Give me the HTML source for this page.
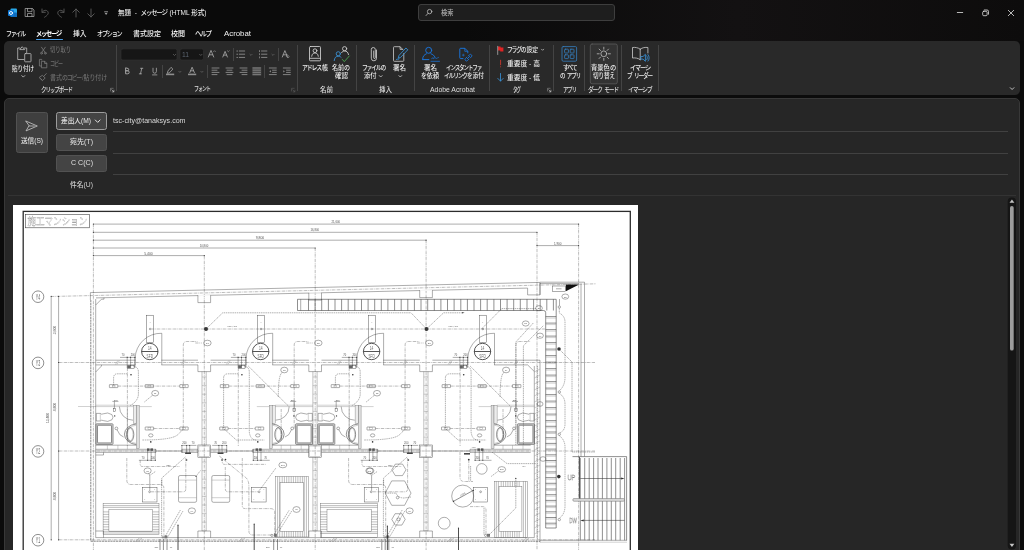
<!DOCTYPE html>
<html lang="ja">
<head>
<meta charset="utf-8">
<title>無題 - メッセージ (HTML 形式)</title>
<style>
html,body{margin:0;padding:0;}
body{width:1024px;height:550px;overflow:hidden;background:#0b0b0b;position:relative;
 font-family:"Liberation Sans","Noto Sans CJK JP",sans-serif;color:#e6e6e6;font-size:7px;line-height:1;}
#root{position:absolute;left:0;top:0;width:1024px;height:550px;will-change:transform;}
.abs{position:absolute;}
svg{position:absolute;overflow:visible;}
.t{position:absolute;white-space:nowrap;line-height:10px;height:10px;font-weight:500;}
.k{letter-spacing:-0.2em;margin-right:0.17em}
#titlebar{left:0;top:0;width:1024px;height:41px;background:linear-gradient(90deg,#0a0a0a 0%,#0a0a0a 45%,#131112 72%,#0d0c0c 100%);}
#search{left:418px;top:4px;width:197px;height:17.4px;border:1px solid #3e3e3e;border-radius:3px;background:#1e1e1e;box-sizing:border-box;}
.tab{font-size:7.2px;color:#f2f2f2;top:29px;}
#ribbon{left:4px;top:41.4px;width:1015.6px;height:53.8px;background:#292929;border-radius:5px;}
.sep{position:absolute;width:1px;background:#444;}
.gl{font-size:6.4px;color:#dedede;top:84.5px;}
.rl{font-size:6.6px;color:#ececec;}
.dim{color:#6b6b6b;}
#compose{left:4px;top:98px;width:1016px;height:460px;background:#262626;border-radius:5px 5px 0 0;border:1px solid #383838;box-sizing:border-box;}
.btn{position:absolute;box-sizing:border-box;background:#444;border:1px solid #525252;border-radius:2.5px;}
.line{position:absolute;height:1px;background:#414141;}
#doc{left:12.7px;top:204.5px;width:625.8px;height:345.5px;background:#fff;overflow:hidden;}
</style>
</head>
<body>
<div id="root">
<div id="titlebar" class="abs"></div>
<div id="search" class="abs"></div>

<!-- title bar icons -->
<svg style="left:0;top:0" width="1024" height="41" viewBox="0 0 1024 41" fill="none" stroke-linecap="round" stroke-linejoin="round">
 <!-- outlook icon -->
 <rect x="10.5" y="8.5" width="6.5" height="8.5" rx="1" fill="#28a8ea" stroke="none"/>
 <rect x="10.5" y="12.5" width="6.5" height="4.5" rx="0.8" fill="#0f6cbd" stroke="none"/>
 <rect x="8" y="10" width="6" height="6" rx="1" fill="#0f78d4" stroke="none"/>
 <circle cx="11" cy="13" r="1.5" stroke="#fff" stroke-width="0.9"/>
 <!-- save -->
 <g stroke="#b4b4b4" stroke-width="0.7">
  <path d="M25.5 8.5h7l1.500 1.500v6.500h-8.500z"/>
  <path d="M27.5 8.7v3h4.5v-3"/>
  <path d="M27.5 16.3v-2.8h4.5v2.8"/>
 </g>
 <!-- undo / redo (dim) -->
 <g stroke="#5c5c5c" stroke-width="0.9">
  <path d="M42 9v3.3h3.3"/><path d="M42.2 12.2c1.3-2.2 4.3-2.6 5.6-0.6c1.2 1.9-0.2 3.7-3.2 5.6"/>
  <path d="M64 9v3.3h-3.3"/><path d="M63.8 12.2c-1.3-2.2-4.3-2.6-5.6-0.6c-1.2 1.9 0.2 3.7 3.2 5.6"/>
  <path d="M76 17v-8M72.8 12.2l3.2-3.2l3.2 3.2"/>
  <path d="M91 9v8M87.8 13.8l3.2 3.2l3.2-3.2"/>
 </g>
 <g stroke="#d0d0d0" stroke-width="0.7"><path d="M104.6 11.8h3"/></g>
 <path d="M104.7 13.2h2.8l-1.4 1.5z" fill="#d0d0d0"/>
 <!-- search magnifier -->
 <g stroke="#bdbdbd" stroke-width="0.8"><circle cx="429.6" cy="11.6" r="2.2"/><path d="M428 13.4l-2 2.2"/></g>
 <!-- window buttons -->
 <g stroke="#e4e4e4" stroke-width="0.8">
  <path d="M957.3 12.5h5.4"/>
  <rect x="982.700" y="11.300" width="4.400" height="4.400" rx="1"/><path d="M984.300 10h2.800a1.400 1.400 0 0 1 1.400 1.400v2.800"/>
  <path d="M1008.3 10.3l5.4 5.4M1013.700 10.300l-5.400 5.400"/>
 </g>
</svg>

<!-- tabs -->
<div class="abs" style="left:36px;top:38.5px;width:27px;height:1.2px;background:#4a9ee8;border-radius:1px"></div>

<div id="ribbon" class="abs"></div>
<div class="sep" style="left:115.5px;top:44.5px;height:46.5px"></div>
<div class="sep" style="left:296.5px;top:44.5px;height:46.5px"></div>
<div class="sep" style="left:356px;top:44.5px;height:46.5px"></div>
<div class="sep" style="left:414px;top:44.5px;height:46.5px"></div>
<div class="sep" style="left:489px;top:44.5px;height:46.5px"></div>
<div class="sep" style="left:553px;top:44.5px;height:46.5px"></div>
<div class="sep" style="left:584px;top:44.5px;height:46.5px"></div>
<div class="sep" style="left:621px;top:44.5px;height:46.5px"></div>
<div class="sep" style="left:658px;top:44.5px;height:46.5px"></div>
<div class="sep" style="left:233px;top:48px;height:12.5px"></div>
<div class="sep" style="left:278px;top:48px;height:12.5px"></div>
<div class="sep" style="left:162px;top:65px;height:12.5px"></div>
<div class="sep" style="left:207px;top:65px;height:12.5px"></div>
<div class="sep" style="left:264px;top:65px;height:12.5px"></div>
<svg style="left:0;top:0" width="1024" height="100" viewBox="0 0 1024 100" fill="none" stroke-linecap="round" stroke-linejoin="round" stroke-width="0.9">
 <!-- paste -->
 <g stroke="#bdbdbd" stroke-width="0.8">
  <path d="M24 59.5h-6.3v-11.5h2.2M24.3 48h2.4v5"/>
  <path d="M20 49.3l2.2-2.6l2.2 2.6z"/>
  <rect x="24.7" y="53.6" width="6.3" height="8.2" rx="0.6" fill="#292929"/>
 </g>
 <path d="M21.8 75.6l1.5 1.5l1.5-1.5" stroke="#cfcfcf" stroke-width="0.8"/>
 <!-- cut copy painter (dim) -->
 <g stroke="#7a7a7a" stroke-width="0.8">
  <path d="M41.5 47.2l3.4 5M45.3 47.2l-3.4 5"/><circle cx="41.5" cy="53.2" r="0.9"/><circle cx="45.3" cy="53.2" r="0.9"/>
  <path d="M41.7 60v-0.6h-2.3v6.6h2"/><path d="M41.8 61.3h3l2 2v4.5h-5z"/><path d="M44.6 61.5v2h2"/>
  <path d="M46.3 73.6l-2.6 2.8"/><path d="M42.6 75.6l2.6 2.4l-2.8 2.6l-3-2.8z"/><path d="M40.6 78.6l1.6 1.5"/>
 </g>
 <!-- dialog launchers -->
 <g stroke="#8d8d8d" stroke-width="0.6">
  <path d="M110.5 91v-2.7h2.7"/><path d="M111.8 89.8l2 2M113.9 90.2v1.7h-1.7" stroke="#cfcfcf"/>
  <path d="M291.5 91v-2.7h2.7" stroke="#5a5a5a"/><path d="M292.8 89.8l2 2M294.9 90.2v1.7h-1.7" stroke="#5a5a5a"/>
  <path d="M547.5 91v-2.7h2.7"/><path d="M548.8 89.8l2 2M550.9 90.2v1.7h-1.7" stroke="#cfcfcf"/>
 </g>
 <!-- font combos -->
 <rect x="121" y="48.8" width="56" height="11.2" rx="1.8" fill="#161616" stroke="#343434" stroke-width="0.6"/>
 <rect x="180" y="48.8" width="23.5" height="11.2" rx="1.8" fill="#161616" stroke="#343434" stroke-width="0.6"/>
 <g stroke="#6a6a6a" stroke-width="0.7">
  <path d="M173.3 54.3l1.2 1.2l1.2-1.2"/><path d="M199.6 54.3l1.2 1.2l1.2-1.2"/>
  <path d="M178.8 71.3l1.1 1.1l1.1-1.1"/><path d="M200.8 71.3l1.1 1.1l1.1-1.1"/>
  <path d="M249.9 54.3l1.1 1.1l1.1-1.1"/><path d="M271.9 54.3l1.1 1.1l1.1-1.1"/>
 </g>
 <!-- A grow/shrink -->
 <g stroke="#a4a4a4" stroke-width="0.85">
  <path d="M208.3 57l2.7-6.6l2.7 6.6M209.3 54.8h3.4"/><path d="M213.6 51.6l0.9-0.9l0.9 0.9" stroke-width="0.6"/>
  <path d="M222.8 57l2.3-5.6l2.3 5.6M223.7 55.1h2.8"/><path d="M227.4 50.8l0.9 0.9l0.9-0.9" stroke-width="0.6"/>
 </g>
 <!-- bullets -->
 <g stroke="#9a9a9a" stroke-width="0.8">
  <path d="M239.3 51h5.4M239.3 54.2h5.4M239.3 57.4h5.4"/>
  <path d="M261.5 51h5.4M261.5 54.2h5.4M261.5 57.4h5.4"/>
 </g>
 <g fill="#9a9a9a"><rect x="236.6" y="50.5" width="1.1" height="1.1"/><rect x="236.6" y="53.7" width="1.1" height="1.1"/><rect x="236.6" y="56.9" width="1.1" height="1.1"/>
  <rect x="259" y="50.2" width="0.7" height="1.8"/><rect x="259" y="53.3" width="0.7" height="1.8"/><rect x="259" y="56.5" width="0.7" height="1.8"/></g>
 <!-- clear formatting -->
 <g stroke="#a4a4a4" stroke-width="0.85"><path d="M282.3 57l2.6-6.4l2.6 6.4M283.2 54.8h3.4"/><path d="M287.5 55l1.8 1.6l-1.3 1.4l-1.7-1.6z" stroke-width="0.6"/></g>
 <!-- B I U -->
 <g stroke="#a8a8a8" stroke-width="0.95">
  <path d="M125.6 68.2v5.6h2.1a1.5 1.5 0 0 0 0-3h-2.1h1.8a1.3 1.3 0 0 0 0-2.6z"/>
  <path d="M141.8 68.3l-1.3 5.5M140.6 68.3h2.2M139.3 73.8h2.2" stroke-width="0.8"/>
  <path d="M153 68.2v3.3a1.7 1.7 0 0 0 3.4 0v-3.3M152.5 74.9h4.4" stroke-width="0.8"/>
 </g>
 <!-- highlighter -->
 <g stroke="#a4a4a4" stroke-width="0.8"><path d="M171.3 67.6l1.6 1.5l-3.6 3.8l-1.9 0.4l0.4-1.9z"/></g>
 <rect x="166" y="73.6" width="8.2" height="1.6" fill="#8e8e8e"/>
 <!-- font colour -->
 <g stroke="#a4a4a4" stroke-width="0.85"><path d="M189.8 72.6l2.3-5.4l2.3 5.4M190.6 70.8h3"/></g>
 <rect x="188" y="73.6" width="8.2" height="1.6" fill="#8e8e8e"/>
 <!-- alignments -->
 <g stroke="#9a9a9a" stroke-width="0.8">
  <path d="M212 68h7M212 70.2h5M212 72.4h7M212 74.6h5"/>
  <path d="M226 68h7M227 70.2h5M226 72.4h7M227 74.6h5"/>
  <path d="M240 68h7M242 70.2h5M240 72.4h7M242 74.6h5"/>
  <path d="M253 68h7.5M253 70.2h7.5M253 72.4h7.5M253 74.6h7.5" stroke="#8a8a8a"/>
  <path d="M269.3 68h7M272.5 70.2h3.8M272.5 72.4h3.8M269.3 74.6h7"/>
  <path d="M283.3 68h7M286.5 70.2h3.8M286.5 72.4h3.8M283.3 74.6h7"/>
 </g>
 <rect x="252.3" y="67" width="9" height="8.6" fill="#8a8a8a" opacity="0.35"/>
 <path d="M270.8 70.2v2.2l-1.4-1.1z" fill="#9a9a9a"/><path d="M283.4 70.2v2.2l1.4-1.1z" fill="#9a9a9a"/>
 <!-- address book -->
 <g stroke="#d2d2d2" stroke-width="0.85">
  <rect x="309.5" y="46.5" width="11" height="14.3" rx="0.9"/><path d="M309.8 58.3h10.4"/>
  <circle cx="315" cy="50.7" r="1.9"/><path d="M311.7 56.3c0.3-2.6 1.7-3.3 3.3-3.3s3 0.7 3.3 3.3"/>
 </g>
 <!-- check names -->
 <g stroke-width="0.85">
  <circle cx="344.6" cy="48.7" r="2.1" stroke="#d2d2d2"/><path d="M341.6 52.6c0.8-1.2 1.8-1.6 3-1.6c2 0 3.6 1.2 3.9 3.6" stroke="#d2d2d2"/>
  <circle cx="338.3" cy="53.8" r="2.1" stroke="#3a96dd"/><path d="M334.2 60.6c0.3-3 1.8-4.4 4.1-4.4c1.2 0 2.1 0.4 2.8 1.1" stroke="#3a96dd"/>
  <path d="M342.3 59.4l2 2.2l5-5.6" stroke="#4caf50"/>
 </g>
 <!-- paperclip -->
 <g stroke="#d2d2d2" stroke-width="0.85"><path d="M376.5 50v8.2a2.6 2.6 0 0 1-5.2 0v-8.7a2 2 0 0 1 4 0v8.2a0.8 0.8 0 0 1-1.6 0v-6.7"/></g>
 <!-- signature -->
 <g stroke-width="0.85">
  <path d="M403.8 53.5v7a0.8 0.8 0 0 1-0.8 0.8h-8.700a0.8 0.8 0 0 1-0.8-0.8v-13a0.8 0.8 0 0 1 0.8-0.8h5.700l2.6 2.6" stroke="#c4c4c4"/>
  <path d="M400.100 46.900v2.500h2.500" stroke="#c4c4c4"/>
  <path d="M406.200 48.300l1.600 1.500l-7.200 7.600l-2.400 0.800l0.700-2.400z" stroke="#3a96dd"/><path d="M396.400 59.400c1.200-0.900 1.700 0.400 2.700-0.400" stroke="#3a96dd"/>
 </g>
 <path d="M398.900 75.600l1.400 1.400l1.400-1.400" stroke="#cfcfcf" stroke-width="0.8"/>
 <path d="M379.300 75.600l1.400 1.400l1.400-1.400" stroke="#cfcfcf" stroke-width="0.8"/>
 <!-- request signature (blue) -->
 <g stroke="#1a73d8" stroke-width="1">
  <circle cx="428.700" cy="50.300" r="3"/><path d="M422.700 59.400c-0.200-3.400 1.700-4.700 3.700-5.600M431 53.800c2 0.800 3.400 1.700 3.800 3.300"/><path d="M422.700 59.600h6.200"/>
  <path d="M431 61.300h8.500" stroke-width="0.8"/><path d="M431.500 58.700l1.700-1.200l-0.100 1.400l2.200-1.500l0.600 1.300l2.700-1.300" stroke-width="0.6"/>
 </g>
 <!-- instant file link (blue) -->
 <g stroke="#1a73d8" stroke-width="1">
  <path d="M463 58.600h-2.400a0.800 0.800 0 0 1-0.800-0.800v-8.700a0.800 0.800 0 0 1 0.800-0.800h4.200l3 3v1.600"/><path d="M464.800 48.500v2.800h2.800" stroke-width="0.8"/>
  <path d="M466.700 57.300l-1.200 1.200a1.400 1.400 0 0 0 2 2l1.200-1.200M468.200 56l1.200-1.200a1.400 1.400 0 0 1 2 2l-1.200 1.200M467.300 58.700l2.300-2.300" stroke-width="0.9"/>
  <path d="M463.300 54.100v2M462.300 55.100h2" stroke-width="0.6"/>
 </g>
 <!-- flag -->
 <path d="M498 46.600h2.600v1h2.800v4h-3.200v-1h-2.200z" fill="#e02424"/><path d="M497.700 46.300v8.200" stroke="#bdbdbd" stroke-width="0.7"/>
 <path d="M541.500 49.200l1.100 1.100l1.100-1.100" stroke="#cfcfcf" stroke-width="0.7"/>
 <path d="M500.600 60.200v4.600" stroke="#c9372c" stroke-width="0.9"/><circle cx="500.600" cy="66.700" r="0.55" fill="#c9372c"/>
 <path d="M500.500 73.500v7.500M497.800 78.400l2.700 2.700l2.700-2.700" stroke="#3a96dd" stroke-width="0.8"/>
 <!-- all apps -->
 <g stroke="#3580c2" stroke-width="0.8">
  <rect x="562" y="46.600" width="14.600" height="14.600" rx="1.200"/>
  <rect x="564.600" y="49.200" width="3.800" height="3.800" rx="0.700"/><rect x="570.200" y="49.200" width="3.800" height="3.800" rx="0.700"/>
  <rect x="564.600" y="54.800" width="3.800" height="3.800" rx="0.700"/><rect x="570.200" y="54.800" width="3.800" height="3.800" rx="0.700"/>
 </g>
 <!-- dark mode button -->
 <rect x="590.300" y="44" width="27" height="39.800" rx="1.800" fill="#333333" stroke="#626262" stroke-width="0.7"/>
 <g stroke="#c8c8c8" stroke-width="0.75">
  <circle cx="603.800" cy="53.800" r="2.900"/>
  <path d="M603.800 47.200v2M603.800 58.400v2M597.200 53.800h2M608.400 53.800h2M599.100 49.100l1.400 1.400M607.100 57.100l1.400 1.400M608.500 49.100l-1.400 1.400M600.500 57.100l-1.400 1.400"/>
 </g>
 <!-- immersive reader -->
 <g stroke="#cdcdcd" stroke-width="0.8">
  <path d="M640.200 49.200c-2.200-1.700-5-2-7.700-1.700v10.500c2.700-0.300 5.500 0 7.700 1.700"/><path d="M640.200 49.200v10.500M640.200 49.200c2.200-1.700 5-2 7.700-1.700v5.500"/>
 </g>
 <g stroke="#3a96dd" stroke-width="0.8">
  <path d="M641.200 56.500h1.800l2.400-2.200v7l-2.400-2.200h-1.800z"/><path d="M646.700 55.800c0.900 1.200 0.900 2.800 0 4M648 54.600c1.600 2 1.600 4.500 0 6.500"/>
 </g>
 <!-- collapse ribbon -->
 <path d="M1010.300 87.700l1.800 1.800l1.800-1.800" stroke="#d4d4d4" stroke-width="0.9"/>
</svg>

<div id="compose" class="abs"></div>

<div class="btn" style="left:16px;top:112px;width:32px;height:41px;background:#3f3f3f"></div>
<div class="btn" style="left:56px;top:112px;width:51px;height:18px;border-color:#9c9c9c"></div>
<div class="btn" style="left:56px;top:134px;width:51px;height:17.3px"></div>
<div class="btn" style="left:56px;top:155px;width:51px;height:17.3px"></div>
<div class="line" style="left:113px;top:131px;width:894.5px"></div>
<div class="line" style="left:113px;top:152.8px;width:894.5px"></div>
<div class="line" style="left:113px;top:174px;width:894.5px"></div>
<div class="line" style="left:8px;top:195px;width:1008px;background:#333"></div>
<svg style="left:0;top:95px" width="1024" height="455" viewBox="0 95 1024 455" fill="none" stroke-linecap="round" stroke-linejoin="round">
 <path d="M26 121.100l11.300 4.900l-11.300 4.900l2.900-4.900z M28.900 126h5.500" stroke="#c8c8c8" stroke-width="0.8"/>
 <path d="M95.300 120l2.400 2.400l2.400-2.400" stroke="#e4e4e4" stroke-width="1"/>
 <rect x="1007.700" y="197.500" width="8.300" height="352" rx="4" fill="#151515"/>
 <rect x="1010" y="206" width="3.700" height="144.500" rx="1.850" fill="#9d9d9d"/>
 <path d="M1009.500 202.700l2.450-3.300l2.450 3.300z" fill="#c4c4c4"/>
 <path d="M1009.500 543.700l2.450 3.300l2.450-3.300z" fill="#c4c4c4"/>
</svg>

<div class="t" style="left:117.5px;top:7.7px;font-size:7px;color:#efefef;transform:scaleX(0.936);transform-origin:0 50%">無題  -  <span class="k">メッセージ</span> (HTML 形式)</div>
<div class="t" style="left:441px;top:8.3px;font-size:6.6px;color:#b4b4b4;transform:scaleX(0.948);transform-origin:0 50%">検索</div>
<div class="t" style="left:6px;top:28.7px;font-size:7px;color:#f2f2f2;transform:scaleX(0.848);transform-origin:0 50%"><span class="k">ファイル</span></div>
<div class="t" style="left:36px;top:28.7px;font-size:7px;color:#ffffff;font-weight:bold;transform:scaleX(0.895);transform-origin:0 50%"><span class="k">メッセージ</span></div>
<div class="t" style="left:72.5px;top:28.7px;font-size:7px;color:#f2f2f2;transform:scaleX(0.964);transform-origin:0 50%">挿入</div>
<div class="t" style="left:96.5px;top:28.7px;font-size:7px;color:#f2f2f2;transform:scaleX(0.874);transform-origin:0 50%"><span class="k">オプション</span></div>
<div class="t" style="left:133px;top:28.7px;font-size:7px;color:#f2f2f2;transform:scaleX(1.000);transform-origin:0 50%">書式設定</div>
<div class="t" style="left:171px;top:28.7px;font-size:7px;color:#f2f2f2;transform:scaleX(1.000);transform-origin:0 50%">校閲</div>
<div class="t" style="left:195px;top:28.7px;font-size:7px;color:#f2f2f2;transform:scaleX(0.944);transform-origin:0 50%"><span class="k">ヘルプ</span></div>
<div class="t" style="left:224px;top:28.7px;font-size:7px;color:#f2f2f2;transform:scaleX(1.119);transform-origin:0 50%">Acrobat</div>
<div class="t" style="left:12px;top:64.2px;font-size:6.6px;color:#ececec;transform:scaleX(0.847);transform-origin:0 50%">貼<span class="k">り</span>付<span class="k">け</span></div>
<div class="t" style="left:50px;top:45.2px;font-size:6.6px;color:#6d6d6d;transform:scaleX(0.809);transform-origin:0 50%">切<span class="k">り</span>取<span class="k">り</span></div>
<div class="t" style="left:50px;top:58.7px;font-size:6.6px;color:#6d6d6d;transform:scaleX(0.768);transform-origin:0 50%"><span class="k">コピー</span></div>
<div class="t" style="left:50px;top:73.2px;font-size:6.6px;color:#6d6d6d;transform:scaleX(0.902);transform-origin:0 50%">書式<span class="k">のコピー</span>/貼<span class="k">り</span>付<span class="k">け</span></div>
<div class="t" style="left:41px;top:85.2px;font-size:6.4px;color:#dedede;transform:scaleX(0.868);transform-origin:0 50%"><span class="k">クリップボード</span></div>
<div class="t" style="left:181.5px;top:50.3px;font-size:7.2px;color:#5b6470;transform:scaleX(0.937);transform-origin:0 50%">11</div>
<div class="t" style="left:194px;top:84.2px;font-size:6.4px;color:#dedede;transform:scaleX(0.790);transform-origin:0 50%"><span class="k">フォント</span></div>
<div class="t" style="left:302px;top:62.7px;font-size:6.6px;color:#ececec;transform:scaleX(0.902);transform-origin:0 50%"><span class="k">アドレス</span>帳</div>
<div class="t" style="left:332px;top:62.7px;font-size:6.6px;color:#ececec;transform:scaleX(0.919);transform-origin:0 50%">名前<span class="k">の</span></div>
<div class="t" style="left:335px;top:70.7px;font-size:6.6px;color:#ececec;transform:scaleX(0.986);transform-origin:0 50%">確認</div>
<div class="t" style="left:320px;top:85.2px;font-size:6.4px;color:#dedede;transform:scaleX(1.017);transform-origin:0 50%">名前</div>
<div class="t" style="left:362px;top:62.7px;font-size:6.6px;color:#ececec;transform:scaleX(0.873);transform-origin:0 50%"><span class="k">ファイルの</span></div>
<div class="t" style="left:364px;top:70.7px;font-size:6.6px;color:#ececec;transform:scaleX(0.948);transform-origin:0 50%">添付</div>
<div class="t" style="left:393px;top:62.7px;font-size:6.6px;color:#ececec;transform:scaleX(0.986);transform-origin:0 50%">署名</div>
<div class="t" style="left:379px;top:85.2px;font-size:6.4px;color:#dedede;transform:scaleX(1.017);transform-origin:0 50%">挿入</div>
<div class="t" style="left:424px;top:62.7px;font-size:6.6px;color:#ececec;transform:scaleX(0.986);transform-origin:0 50%">署名</div>
<div class="t" style="left:421px;top:70.7px;font-size:6.6px;color:#ececec;transform:scaleX(0.919);transform-origin:0 50%"><span class="k">を</span>依頼</div>
<div class="t" style="left:446px;top:62.7px;font-size:6.6px;color:#ececec;transform:scaleX(0.834);transform-origin:0 50%"><span class="k">インスタントファ</span></div>
<div class="t" style="left:444px;top:70.7px;font-size:6.6px;color:#ececec;transform:scaleX(0.870);transform-origin:0 50%"><span class="k">イルリンクを</span>添付</div>
<div class="t" style="left:430px;top:85.2px;font-size:6.4px;color:#dedede;transform:scaleX(1.073);transform-origin:0 50%">Adobe Acrobat</div>
<div class="t" style="left:507px;top:44.5px;font-size:6.6px;color:#ececec;transform:scaleX(0.876);transform-origin:0 50%"><span class="k">フラグの</span>設定</div>
<div class="t" style="left:507px;top:59.4px;font-size:6.6px;color:#ececec;transform:scaleX(1.023);transform-origin:0 50%">重要度 - 高</div>
<div class="t" style="left:507px;top:73.2px;font-size:6.6px;color:#ececec;transform:scaleX(1.023);transform-origin:0 50%">重要度 - 低</div>
<div class="t" style="left:513px;top:85.2px;font-size:6.4px;color:#dedede;transform:scaleX(0.707);transform-origin:0 50%"><span class="k">タグ</span></div>
<div class="t" style="left:562.5px;top:62.7px;font-size:6.6px;color:#ececec;transform:scaleX(0.894);transform-origin:0 50%"><span class="k">すべて</span></div>
<div class="t" style="left:559.5px;top:70.7px;font-size:6.6px;color:#ececec;transform:scaleX(0.834);transform-origin:0 50%"><span class="k">の</span> <span class="k">アプリ</span></div>
<div class="t" style="left:563px;top:85.2px;font-size:6.4px;color:#dedede;transform:scaleX(0.853);transform-origin:0 50%"><span class="k">アプリ</span></div>
<div class="t" style="left:591px;top:62.7px;font-size:6.6px;color:#ececec;transform:scaleX(0.955);transform-origin:0 50%">背景色<span class="k">の</span></div>
<div class="t" style="left:593px;top:70.7px;font-size:6.6px;color:#ececec;transform:scaleX(0.847);transform-origin:0 50%">切<span class="k">り</span>替<span class="k">え</span></div>
<div class="t" style="left:588px;top:85.2px;font-size:6.4px;color:#dedede;transform:scaleX(0.895);transform-origin:0 50%"><span class="k">ダーク</span> <span class="k">モード</span></div>
<div class="t" style="left:630px;top:62.7px;font-size:6.6px;color:#ececec;transform:scaleX(0.951);transform-origin:0 50%"><span class="k">イマーシ</span></div>
<div class="t" style="left:627px;top:70.7px;font-size:6.6px;color:#ececec;transform:scaleX(0.854);transform-origin:0 50%"><span class="k">ブ</span> <span class="k">リーダー</span></div>
<div class="t" style="left:628px;top:85.2px;font-size:6.4px;color:#dedede;transform:scaleX(0.924);transform-origin:0 50%"><span class="k">イマーシブ</span></div>
<div class="t" style="left:21px;top:135.7px;font-size:6.6px;color:#e4e4e4;transform:scaleX(1.001);transform-origin:0 50%">送信(S)</div>
<div class="t" style="left:61px;top:115.7px;font-size:6.6px;color:#e8e8e8;transform:scaleX(1.011);transform-origin:0 50%">差出人(M)</div>
<div class="t" style="left:113px;top:115.7px;font-size:6.6px;color:#d8d8d8;transform:scaleX(1.074);transform-origin:0 50%">tsc-city@tanaksys.com</div>
<div class="t" style="left:70px;top:137.2px;font-size:6.6px;color:#e0e0e0;transform:scaleX(1.064);transform-origin:0 50%">宛先(T)</div>
<div class="t" style="left:71px;top:158.2px;font-size:6.6px;color:#e0e0e0;transform:scaleX(1.072);transform-origin:0 50%">C C(C)</div>
<div class="t" style="left:70px;top:179.7px;font-size:6.6px;color:#cfcfcf;transform:scaleX(1.029);transform-origin:0 50%">件名(U)</div>
<div id="doc" class="abs">
<svg style="left:-0.7px;top:-0.5px" width="627" height="346" viewBox="12 204 627 346" fill="none">
<style>.l{stroke:#3c3c3c;stroke-width:.42}.m{stroke:#333;stroke-width:.55}.k{stroke:#1c1c1c;stroke-width:.75}.g{stroke:#8a8a8a;stroke-width:.4}.b{stroke:#5e5e5e;stroke-width:.4}.dd{stroke:#555;stroke-width:.4;stroke-dasharray:3.2 .8 .7 .8}.dk{stroke:#333;stroke-width:.6;stroke-dasharray:2.2 .6}.ds{stroke:#444;stroke-width:.42;stroke-dasharray:1.5 .7}.tx{fill:#555;font-family:"Liberation Sans",sans-serif}.tn{fill:#6a6a6a;font-family:"Liberation Sans",sans-serif}.tg{fill:#fff;stroke:#777;stroke-width:.3;font-family:"Liberation Sans",sans-serif}.ttl{fill:#fff;stroke:#8c8c8c;stroke-width:.28;font-family:"Liberation Sans","Noto Sans CJK JP",sans-serif}</style>
<rect x="23.2" y="211.4" width="607.1" height="400" fill="none" stroke="#2c2c2c" stroke-width="1.3"/>
<rect class="m" x="25.3" y="214.6" width="64.3" height="13.2"/>
<text class="ttl" x="57.4" y="225.3" font-size="10.4" text-anchor="middle" textLength="60" lengthAdjust="spacingAndGlyphs">施工マンション</text>
<path class="l" d="M93.4 224.1L578.6 224.1"/>
<circle cx="93.4" cy="224.1" r="0.6" fill="#333"/>
<circle cx="578.6" cy="224.1" r="0.6" fill="#333"/>
<text class="tx" x="335.8" y="223.2" font-size="3.3" text-anchor="middle" textLength="8.6" lengthAdjust="spacingAndGlyphs">21,600</text>
<path class="l" d="M93.4 232.3L537.0 232.3"/>
<circle cx="93.4" cy="232.3" r="0.6" fill="#333"/>
<circle cx="537.0" cy="232.3" r="0.6" fill="#333"/>
<text class="tx" x="314.8" y="231.4" font-size="3.3" text-anchor="middle" textLength="8.6" lengthAdjust="spacingAndGlyphs">16,800</text>
<path class="l" d="M93.4 240.2L426.1 240.2"/>
<circle cx="93.4" cy="240.2" r="0.6" fill="#333"/>
<circle cx="426.1" cy="240.2" r="0.6" fill="#333"/>
<text class="tx" x="260.0" y="239.3" font-size="3.3" text-anchor="middle" textLength="8.6" lengthAdjust="spacingAndGlyphs">9,800</text>
<path class="l" d="M93.4 248.0L315.2 248.0"/>
<circle cx="93.4" cy="248.0" r="0.6" fill="#333"/>
<circle cx="315.2" cy="248.0" r="0.6" fill="#333"/>
<text class="tx" x="204.0" y="247.1" font-size="3.3" text-anchor="middle" textLength="8.6" lengthAdjust="spacingAndGlyphs">10,800</text>
<path class="l" d="M93.4 255.6L204.3 255.6"/>
<circle cx="93.4" cy="255.6" r="0.6" fill="#333"/>
<circle cx="204.3" cy="255.6" r="0.6" fill="#333"/>
<text class="tx" x="148.5" y="254.7" font-size="3.3" text-anchor="middle" textLength="8.6" lengthAdjust="spacingAndGlyphs">5,400</text>
<path class="l" d="M537.0 245.6L578.6 245.6"/>
<circle cx="537.0" cy="245.6" r="0.6" fill="#333"/>
<circle cx="578.6" cy="245.6" r="0.6" fill="#333"/>
<text class="tx" x="557.7" y="244.6" font-size="3.3" text-anchor="middle" textLength="7.6" lengthAdjust="spacingAndGlyphs">1,900</text>
<path class="dd" d="M93.4 224.1L93.4 552.0"/>
<path class="dd" d="M204.3 255.6L204.3 552.0"/>
<path class="dd" d="M315.2 248.0L315.2 552.0"/>
<path class="dd" d="M426.1 240.2L426.1 552.0"/>
<path class="dd" d="M537.0 232.3L537.0 552.0"/>
<path class="dd" d="M578.6 224.1L578.6 552.0"/>
<path class="dd" d="M58.6 362.5L595.0 362.5"/>
<path class="dd" d="M58.6 451.0L595.0 451.0"/>
<path class="dd" d="M58.6 539.8L595.0 539.8"/>
<path class="dd" d="M51.2 296.5L596.0 283.8"/>
<path class="l" d="M51.2 296.3L51.2 539.8"/>
<path class="l" d="M58.6 296.3L58.6 539.8"/>
<circle cx="58.6" cy="296.3" r="0.6" fill="#333"/>
<circle cx="58.6" cy="362.5" r="0.6" fill="#333"/>
<circle cx="58.6" cy="451.0" r="0.6" fill="#333"/>
<circle cx="58.6" cy="539.8" r="0.6" fill="#333"/>
<circle cx="51.2" cy="296.3" r="0.6" fill="#333"/>
<circle cx="51.2" cy="539.8" r="0.6" fill="#333"/>
<circle class="m" cx="38.0" cy="296.7" r="5.8"/>
<text class="tn" x="38.0" y="299.7" font-size="8.6" text-anchor="middle" textLength="4.4" lengthAdjust="spacingAndGlyphs">Y4</text>
<circle class="m" cx="38.0" cy="362.9" r="5.8"/>
<text class="tn" x="38.0" y="365.9" font-size="8.6" text-anchor="middle" textLength="4.4" lengthAdjust="spacingAndGlyphs">Y3</text>
<circle class="m" cx="38.0" cy="451.4" r="5.8"/>
<text class="tn" x="38.0" y="454.4" font-size="8.6" text-anchor="middle" textLength="4.4" lengthAdjust="spacingAndGlyphs">Y2</text>
<circle class="m" cx="38.0" cy="540.2" r="5.8"/>
<text class="tn" x="38.0" y="543.2" font-size="8.6" text-anchor="middle" textLength="4.4" lengthAdjust="spacingAndGlyphs">Y1</text>
<text class="tx" x="56.2" y="330.0" font-size="3.3" text-anchor="middle" transform="rotate(-90 56.2 330)">3,600</text>
<text class="tx" x="56.2" y="407.0" font-size="3.3" text-anchor="middle" transform="rotate(-90 56.2 407)">4,800</text>
<text class="tx" x="56.2" y="496.0" font-size="3.3" text-anchor="middle" transform="rotate(-90 56.2 496)">4,800</text>
<text class="tx" x="48.8" y="418.0" font-size="3.3" text-anchor="middle" transform="rotate(-90 48.8 418)">13,400</text>
<path class="g" d="M78.0 406.5L96.0 406.5"/>
<path class="l" d="M90.4 292.6L540 282.4"/>
<path class="l" d="M96 297.9L527.6 288.1"/>
<path class="l" d="M197.9 295.4V302.6H210.6V295.4"/>
<path d="M198.3 295.4H210.2" stroke="#fff" stroke-width="1"/>
<path class="l" d="M308.8 292.9V300.1H321.5V292.9"/>
<path d="M309.2 292.9H321.1" stroke="#fff" stroke-width="1"/>
<path class="l" d="M419.7 290.4V297.6H432.4V290.4"/>
<path d="M420.1 290.4H432.0" stroke="#fff" stroke-width="1"/>
<path class="l" d="M527.6 288.1V294.9H540V282.4"/>
<path class="l" d="M90.4 292.6L90.4 300.0"/>
<path class="dk" d="M90.8 300.0L90.8 541.2"/>
<path class="l" d="M95.7 299.0L95.7 537.6"/>
<path class="l" d="M95.7 305L101.5 299.2H104V297.7"/>
<path class="l" d="M95.7 372L101.5 366V364.9"/>
<path class="l" d="M540.0 282.2L584.5 282.2"/>
<path class="l" d="M540.0 283.6L579.0 283.6"/>
<rect class="l" x="552.7" y="286.0" width="12.5" height="5.4"/>
<path class="l" d="M556.0 288.8L561.5 288.8"/>
<path d="M565.8 284.4H579.2L565.8 291.3Z" fill="#111"/>
<path class="l" d="M581.0 283.6L581.0 456.4"/>
<path class="l" d="M584.5 282.2L584.5 456.4"/>
<path class="l" d="M95.7 360.2L135.6 360.2"/>
<path class="l" d="M161.4 360.2L198.0 360.2"/>
<path class="l" d="M95.7 364.9L135.6 364.9"/>
<path class="l" d="M161.4 364.9L198.0 364.9"/>
<path class="g" d="M115.4 364.6L117.9 360.5"/>
<path class="g" d="M116.9 364.6L119.4 360.5"/>
<path class="g" d="M181.4 364.6L183.9 360.5"/>
<path class="g" d="M182.9 364.6L185.4 360.5"/>
<path class="l" d="M210.6 360.2L246.5 360.2"/>
<path class="l" d="M272.3 360.2L308.9 360.2"/>
<path class="l" d="M210.6 364.9L246.5 364.9"/>
<path class="l" d="M272.3 364.9L308.9 364.9"/>
<path class="g" d="M226.3 364.6L228.8 360.5"/>
<path class="g" d="M227.8 364.6L230.3 360.5"/>
<path class="g" d="M292.3 364.6L294.8 360.5"/>
<path class="g" d="M293.8 364.6L296.3 360.5"/>
<path class="l" d="M321.5 360.2L357.4 360.2"/>
<path class="l" d="M383.2 360.2L419.8 360.2"/>
<path class="l" d="M321.5 364.9L357.4 364.9"/>
<path class="l" d="M383.2 364.9L419.8 364.9"/>
<path class="g" d="M337.2 364.6L339.7 360.5"/>
<path class="g" d="M338.7 364.6L341.2 360.5"/>
<path class="g" d="M403.2 364.6L405.7 360.5"/>
<path class="g" d="M404.7 364.6L407.2 360.5"/>
<path class="l" d="M432.4 360.2L468.3 360.2"/>
<path class="l" d="M494.1 360.2L540.0 360.2"/>
<path class="l" d="M432.4 364.9L468.3 364.9"/>
<path class="l" d="M494.1 364.9L527.6 364.9"/>
<path class="g" d="M448.1 364.6L450.6 360.5"/>
<path class="g" d="M449.6 364.6L452.1 360.5"/>
<path class="g" d="M514.1 364.6L516.6 360.5"/>
<path class="g" d="M515.6 364.6L518.1 360.5"/>
<path class="l" d="M197.9 364.9V371.6H210.6V364.9"/>
<path class="b" d="M202.0 371.6L202.0 445.0"/>
<path class="b" d="M206.2 371.6L206.2 445.0"/>
<path class="g" d="M202.0 377.0L206.2 377.0"/>
<path class="g" d="M202.0 385.6L206.2 385.6"/>
<path class="g" d="M202.0 394.2L206.2 394.2"/>
<path class="g" d="M202.0 402.8L206.2 402.8"/>
<path class="g" d="M202.0 411.4L206.2 411.4"/>
<path class="g" d="M202.0 420.0L206.2 420.0"/>
<path class="g" d="M202.0 428.6L206.2 428.6"/>
<path class="g" d="M202.0 437.2L206.2 437.2"/>
<path class="g" d="M202.0 445.8L206.2 445.8"/>
<rect class="l" x="197.9" y="445.0" width="12.7" height="12.3"/>
<rect class="g" x="198.9" y="446.0" width="10.7" height="10.3"/>
<path class="b" d="M202.0 457.3L202.0 531.0"/>
<path class="b" d="M206.2 457.3L206.2 531.0"/>
<path class="g" d="M202.0 462.0L206.2 462.0"/>
<path class="g" d="M202.0 470.6L206.2 470.6"/>
<path class="g" d="M202.0 479.2L206.2 479.2"/>
<path class="g" d="M202.0 487.8L206.2 487.8"/>
<path class="g" d="M202.0 496.4L206.2 496.4"/>
<path class="g" d="M202.0 505.0L206.2 505.0"/>
<path class="g" d="M202.0 513.6L206.2 513.6"/>
<path class="g" d="M202.0 522.2L206.2 522.2"/>
<path class="g" d="M202.0 530.8L206.2 530.8"/>
<path class="l" d="M197.9 537.6V531H210.6V537.6"/>
<path class="l" d="M308.8 364.9V371.6H321.5V364.9"/>
<path class="b" d="M312.9 371.6L312.9 445.0"/>
<path class="b" d="M317.1 371.6L317.1 445.0"/>
<path class="g" d="M312.9 377.0L317.1 377.0"/>
<path class="g" d="M312.9 385.6L317.1 385.6"/>
<path class="g" d="M312.9 394.2L317.1 394.2"/>
<path class="g" d="M312.9 402.8L317.1 402.8"/>
<path class="g" d="M312.9 411.4L317.1 411.4"/>
<path class="g" d="M312.9 420.0L317.1 420.0"/>
<path class="g" d="M312.9 428.6L317.1 428.6"/>
<path class="g" d="M312.9 437.2L317.1 437.2"/>
<path class="g" d="M312.9 445.8L317.1 445.8"/>
<rect class="l" x="308.8" y="445.0" width="12.7" height="12.3"/>
<rect class="g" x="309.8" y="446.0" width="10.7" height="10.3"/>
<path class="b" d="M312.9 457.3L312.9 531.0"/>
<path class="b" d="M317.1 457.3L317.1 531.0"/>
<path class="g" d="M312.9 462.0L317.1 462.0"/>
<path class="g" d="M312.9 470.6L317.1 470.6"/>
<path class="g" d="M312.9 479.2L317.1 479.2"/>
<path class="g" d="M312.9 487.8L317.1 487.8"/>
<path class="g" d="M312.9 496.4L317.1 496.4"/>
<path class="g" d="M312.9 505.0L317.1 505.0"/>
<path class="g" d="M312.9 513.6L317.1 513.6"/>
<path class="g" d="M312.9 522.2L317.1 522.2"/>
<path class="g" d="M312.9 530.8L317.1 530.8"/>
<path class="l" d="M308.8 537.6V531H321.5V537.6"/>
<path class="l" d="M419.7 364.9V371.6H432.4V364.9"/>
<path class="b" d="M423.8 371.6L423.8 445.0"/>
<path class="b" d="M428.0 371.6L428.0 445.0"/>
<path class="g" d="M423.8 377.0L428.0 377.0"/>
<path class="g" d="M423.8 385.6L428.0 385.6"/>
<path class="g" d="M423.8 394.2L428.0 394.2"/>
<path class="g" d="M423.8 402.8L428.0 402.8"/>
<path class="g" d="M423.8 411.4L428.0 411.4"/>
<path class="g" d="M423.8 420.0L428.0 420.0"/>
<path class="g" d="M423.8 428.6L428.0 428.6"/>
<path class="g" d="M423.8 437.2L428.0 437.2"/>
<path class="g" d="M423.8 445.8L428.0 445.8"/>
<rect class="l" x="419.7" y="445.0" width="12.7" height="12.3"/>
<rect class="g" x="420.7" y="446.0" width="10.7" height="10.3"/>
<path class="b" d="M423.8 457.3L423.8 531.0"/>
<path class="b" d="M428.0 457.3L428.0 531.0"/>
<path class="g" d="M423.8 462.0L428.0 462.0"/>
<path class="g" d="M423.8 470.6L428.0 470.6"/>
<path class="g" d="M423.8 479.2L428.0 479.2"/>
<path class="g" d="M423.8 487.8L428.0 487.8"/>
<path class="g" d="M423.8 496.4L428.0 496.4"/>
<path class="g" d="M423.8 505.0L428.0 505.0"/>
<path class="g" d="M423.8 513.6L428.0 513.6"/>
<path class="g" d="M423.8 522.2L428.0 522.2"/>
<path class="g" d="M423.8 530.8L428.0 530.8"/>
<path class="l" d="M419.7 537.6V531H432.4V537.6"/>
<path class="l" d="M534.3 366.0L534.3 537.6"/>
<path class="l" d="M540.0 283.0L540.0 294.9"/>
<path class="l" d="M540.0 360.2L540.0 542.3"/>
<path class="ds" d="M537.4 366.0L537.4 540.0"/>
<path class="l" d="M527.6 364.9L534.3 371.5"/>
<path class="g" d="M534.3 372.0L540.0 369.0"/>
<path class="g" d="M534.3 378.0L540.0 375.0"/>
<path class="g" d="M534.3 384.0L540.0 381.0"/>
<path class="g" d="M534.3 390.0L540.0 387.0"/>
<path class="g" d="M534.3 396.0L540.0 393.0"/>
<path class="g" d="M534.3 402.0L540.0 399.0"/>
<path class="g" d="M534.3 408.0L540.0 405.0"/>
<path class="g" d="M534.3 414.0L540.0 411.0"/>
<path class="g" d="M534.3 420.0L540.0 417.0"/>
<path class="g" d="M534.3 426.0L540.0 423.0"/>
<path class="g" d="M534.3 432.0L540.0 429.0"/>
<path class="g" d="M534.3 438.0L540.0 435.0"/>
<path class="g" d="M534.3 444.0L540.0 441.0"/>
<path class="g" d="M534.3 450.0L540.0 447.0"/>
<path class="g" d="M534.3 456.0L540.0 453.0"/>
<path class="g" d="M534.3 462.0L540.0 459.0"/>
<path class="g" d="M534.3 468.0L540.0 465.0"/>
<path class="g" d="M534.3 474.0L540.0 471.0"/>
<path class="g" d="M534.3 480.0L540.0 477.0"/>
<path class="g" d="M534.3 486.0L540.0 483.0"/>
<path class="g" d="M534.3 492.0L540.0 489.0"/>
<path class="g" d="M534.3 498.0L540.0 495.0"/>
<path class="g" d="M534.3 504.0L540.0 501.0"/>
<path class="g" d="M534.3 510.0L540.0 507.0"/>
<path class="g" d="M534.3 516.0L540.0 513.0"/>
<path class="g" d="M534.3 522.0L540.0 519.0"/>
<path class="g" d="M534.3 528.0L540.0 525.0"/>
<path class="g" d="M534.3 534.0L540.0 531.0"/>
<path class="dk" d="M90.8 541.2L540.0 541.2"/>
<path class="l" d="M95.7 537.6L534.3 537.6"/>
<path class="l" d="M540.0 540.3L627.0 540.3"/>
<path class="g" d="M540.0 542.2L627.0 542.2"/>
<path class="g" d="M135.0 542.0L139.0 538.0"/>
<path class="g" d="M136.5 542.0L140.5 538.0"/>
<path class="g" d="M138.0 542.0L142.0 538.0"/>
<path class="g" d="M238.0 542.0L242.0 538.0"/>
<path class="g" d="M239.5 542.0L243.5 538.0"/>
<path class="g" d="M241.0 542.0L245.0 538.0"/>
<path class="g" d="M330.0 542.0L334.0 538.0"/>
<path class="g" d="M331.5 542.0L335.5 538.0"/>
<path class="g" d="M333.0 542.0L337.0 538.0"/>
<path class="g" d="M447.0 542.0L451.0 538.0"/>
<path class="g" d="M448.5 542.0L452.5 538.0"/>
<path class="g" d="M450.0 542.0L454.0 538.0"/>
<path class="g" d="M522.0 542.0L526.0 538.0"/>
<path class="g" d="M523.5 542.0L527.5 538.0"/>
<path class="g" d="M525.0 542.0L529.0 538.0"/>
<path class="l" d="M95.7 531H103.5V537.6"/>
<path class="l" d="M95.7 455H103.5V452.4"/>
<path class="m" d="M297.5 299.3L556.2 299.3"/>
<path class="m" d="M297.5 310.5H543.5Q545.7 310.5 545.7 312.7V528"/>
<path class="m" d="M297.5 299.3L297.5 310.5"/>
<path class="l" d="M300.7 299.3L300.7 310.5"/>
<path class="m" d="M308.5 299.3L308.5 310.5"/>
<path class="m" d="M315.1 299.3L315.1 310.5"/>
<path class="m" d="M321.7 299.3L321.7 310.5"/>
<path class="m" d="M328.4 299.3L328.4 310.5"/>
<path class="m" d="M335.0 299.3L335.0 310.5"/>
<path class="m" d="M341.6 299.3L341.6 310.5"/>
<path class="m" d="M348.2 299.3L348.2 310.5"/>
<path class="m" d="M354.8 299.3L354.8 310.5"/>
<path class="m" d="M361.5 299.3L361.5 310.5"/>
<path class="m" d="M368.1 299.3L368.1 310.5"/>
<path class="m" d="M374.7 299.3L374.7 310.5"/>
<path class="m" d="M381.3 299.3L381.3 310.5"/>
<path class="m" d="M387.9 299.3L387.9 310.5"/>
<path class="m" d="M394.6 299.3L394.6 310.5"/>
<path class="m" d="M401.2 299.3L401.2 310.5"/>
<path class="m" d="M407.8 299.3L407.8 310.5"/>
<path class="m" d="M414.4 299.3L414.4 310.5"/>
<path class="m" d="M421.0 299.3L421.0 310.5"/>
<path class="m" d="M427.7 299.3L427.7 310.5"/>
<path class="m" d="M434.3 299.3L434.3 310.5"/>
<path class="m" d="M440.9 299.3L440.9 310.5"/>
<path class="m" d="M447.5 299.3L447.5 310.5"/>
<path class="m" d="M454.1 299.3L454.1 310.5"/>
<path class="m" d="M460.8 299.3L460.8 310.5"/>
<path class="m" d="M467.4 299.3L467.4 310.5"/>
<path class="m" d="M474.0 299.3L474.0 310.5"/>
<path class="m" d="M480.6 299.3L480.6 310.5"/>
<path class="m" d="M487.2 299.3L487.2 310.5"/>
<path class="m" d="M493.9 299.3L493.9 310.5"/>
<path class="m" d="M500.5 299.3L500.5 310.5"/>
<path class="m" d="M507.1 299.3L507.1 310.5"/>
<path class="m" d="M513.7 299.3L513.7 310.5"/>
<path class="m" d="M520.3 299.3L520.3 310.5"/>
<path class="m" d="M527.0 299.3L527.0 310.5"/>
<path class="m" d="M533.6 299.3L533.6 310.5"/>
<path class="m" d="M540.2 299.3L540.2 310.5"/>
<path class="m" d="M546.8 299.3L546.8 310.5"/>
<path class="m" d="M553.4 299.3L553.4 310.5"/>
<path class="m" d="M556.2 299.3L556.2 528.0"/>
<path class="m" d="M545.7 528.0L556.2 528.0"/>
<path class="m" d="M545.7 316.6L556.2 316.6"/>
<path class="g" d="M545.7 318.1L556.2 318.1"/>
<path class="m" d="M545.7 323.1L556.2 323.1"/>
<path class="g" d="M545.7 324.6L556.2 324.6"/>
<path class="m" d="M545.7 329.6L556.2 329.6"/>
<path class="g" d="M545.7 331.1L556.2 331.1"/>
<path class="m" d="M545.7 336.1L556.2 336.1"/>
<path class="g" d="M545.7 337.6L556.2 337.6"/>
<path class="m" d="M545.7 342.6L556.2 342.6"/>
<path class="g" d="M545.7 344.1L556.2 344.1"/>
<path class="m" d="M545.7 349.1L556.2 349.1"/>
<path class="g" d="M545.7 350.6L556.2 350.6"/>
<path class="m" d="M545.7 355.6L556.2 355.6"/>
<path class="g" d="M545.7 357.1L556.2 357.1"/>
<path class="m" d="M545.7 362.1L556.2 362.1"/>
<path class="g" d="M545.7 363.6L556.2 363.6"/>
<path class="m" d="M545.7 368.6L556.2 368.6"/>
<path class="g" d="M545.7 370.1L556.2 370.1"/>
<path class="m" d="M545.7 375.1L556.2 375.1"/>
<path class="g" d="M545.7 376.6L556.2 376.6"/>
<path class="m" d="M545.7 381.6L556.2 381.6"/>
<path class="g" d="M545.7 383.1L556.2 383.1"/>
<path class="m" d="M545.7 388.1L556.2 388.1"/>
<path class="g" d="M545.7 389.6L556.2 389.6"/>
<path class="m" d="M545.7 394.6L556.2 394.6"/>
<path class="g" d="M545.7 396.1L556.2 396.1"/>
<path class="m" d="M545.7 401.1L556.2 401.1"/>
<path class="g" d="M545.7 402.6L556.2 402.6"/>
<path class="m" d="M545.7 407.6L556.2 407.6"/>
<path class="g" d="M545.7 409.1L556.2 409.1"/>
<path class="m" d="M545.7 414.1L556.2 414.1"/>
<path class="g" d="M545.7 415.6L556.2 415.6"/>
<path class="m" d="M545.7 420.6L556.2 420.6"/>
<path class="g" d="M545.7 422.1L556.2 422.1"/>
<path class="m" d="M545.7 426.3L556.2 426.3"/>
<path class="g" d="M545.7 427.8L556.2 427.8"/>
<path class="m" d="M545.7 432.0L556.2 432.0"/>
<path class="g" d="M545.7 433.5L556.2 433.5"/>
<path class="m" d="M545.7 437.7L556.2 437.7"/>
<path class="g" d="M545.7 439.2L556.2 439.2"/>
<path class="m" d="M545.7 443.4L556.2 443.4"/>
<path class="g" d="M545.7 444.9L556.2 444.9"/>
<path class="m" d="M545.7 449.1L556.2 449.1"/>
<path class="g" d="M545.7 450.6L556.2 450.6"/>
<path class="m" d="M545.7 454.8L556.2 454.8"/>
<path class="g" d="M545.7 456.3L556.2 456.3"/>
<path class="m" d="M545.7 460.5L556.2 460.5"/>
<path class="g" d="M545.7 462.0L556.2 462.0"/>
<path class="m" d="M545.7 466.2L556.2 466.2"/>
<path class="g" d="M545.7 467.7L556.2 467.7"/>
<path class="m" d="M545.7 471.9L556.2 471.9"/>
<path class="g" d="M545.7 473.4L556.2 473.4"/>
<path class="m" d="M545.7 477.6L556.2 477.6"/>
<path class="g" d="M545.7 479.1L556.2 479.1"/>
<path class="m" d="M545.7 483.3L556.2 483.3"/>
<path class="g" d="M545.7 484.8L556.2 484.8"/>
<path class="m" d="M545.7 489.0L556.2 489.0"/>
<path class="g" d="M545.7 490.5L556.2 490.5"/>
<path class="m" d="M545.7 494.7L556.2 494.7"/>
<path class="g" d="M545.7 496.2L556.2 496.2"/>
<path class="m" d="M545.7 500.4L556.2 500.4"/>
<path class="g" d="M545.7 501.9L556.2 501.9"/>
<path class="m" d="M545.7 506.1L556.2 506.1"/>
<path class="g" d="M545.7 507.6L556.2 507.6"/>
<path class="m" d="M545.7 511.8L556.2 511.8"/>
<path class="g" d="M545.7 513.3L556.2 513.3"/>
<path class="m" d="M545.7 517.5L556.2 517.5"/>
<path class="g" d="M545.7 519.0L556.2 519.0"/>
<path class="m" d="M545.7 523.2L556.2 523.2"/>
<path class="g" d="M545.7 524.7L556.2 524.7"/>
<path class="m" d="M572.5 456.6H626.6V540.3"/>
<path d="M579.4 457V500" stroke="#333" stroke-width="0.9"/>
<path class="m" d="M580.3 458.0L580.3 540.3"/>
<path class="m" d="M584.7 458.0L584.7 540.3"/>
<path class="m" d="M589.2 458.0L589.2 540.3"/>
<path class="m" d="M593.6 458.0L593.6 540.3"/>
<path class="m" d="M598.0 458.0L598.0 540.3"/>
<path class="m" d="M602.4 458.0L602.4 540.3"/>
<path class="m" d="M606.9 458.0L606.9 540.3"/>
<path class="m" d="M611.3 458.0L611.3 540.3"/>
<path class="m" d="M615.7 458.0L615.7 540.3"/>
<path class="m" d="M620.2 458.0L620.2 540.3"/>
<path class="m" d="M624.6 458.0L624.6 540.3"/>
<rect x="572.8" y="498.5" width="51.7" height="2.8" rx="1.2" fill="#d8d8d8" stroke="#555" stroke-width="0.4"/>
<path class="m" d="M580.3 478.5L622.0 478.5"/>
<path d="M624.5 478.5l-3.4-1v2z" fill="#333"/>
<path class="m" d="M583.0 520.4L624.5 520.4"/>
<path d="M580.3 520.4l3.4-1v2z" fill="#333"/>
<text class="tg" x="571.4" y="480.4" font-size="6.6" text-anchor="middle" textLength="8" lengthAdjust="spacingAndGlyphs">UP</text>
<text class="tg" x="573.1" y="523.0" font-size="6.6" text-anchor="middle" textLength="7.8" lengthAdjust="spacingAndGlyphs">DW</text>
<circle cx="559.0" cy="349.0" r="1.8" fill="#333"/>
<circle cx="558.8" cy="476.6" r="1.8" fill="#333"/>
<circle class="l" cx="559.3" cy="307.0" r="1.2"/>
<circle class="l" cx="559.3" cy="392.0" r="1.2"/>
<circle class="l" cx="559.3" cy="434.3" r="1.2"/>
<circle class="l" cx="559.3" cy="519.6" r="1.2"/>
<path class="ds" d="M559.3 308.3V313Q565 316 565 322V377Q565 386 559.3 390.8"/>
<path class="ds" d="M559.3 393.3Q565 397 565 404V424Q565 431 559.3 433"/>
<path class="ds" d="M559.3 435.6Q565 440 565 447V506Q565 514 559.3 518.4"/>
<path class="ds" d="M560.5 350.5L572 362V452H595"/>
<ellipse class="l" cx="565.3" cy="296.6" rx="3.4" ry="2.6"/>
<text class="tx" x="565.3" y="297.5" font-size="2.4" text-anchor="middle">25</text>
<path class="l" d="M559.5 299.0L559.5 305.6"/>
<ellipse class="l" cx="539.0" cy="308.2" rx="3.4" ry="2.6"/>
<text class="tx" x="539.0" y="309.1" font-size="2.4" text-anchor="middle">24</text>
<ellipse class="l" cx="525.7" cy="323.5" rx="3.4" ry="2.6"/>
<text class="tx" x="525.7" y="324.4" font-size="2.4" text-anchor="middle">20</text>
<ellipse class="l" cx="540.0" cy="335.7" rx="3.4" ry="2.6"/>
<text class="tx" x="540.0" y="336.6" font-size="2.4" text-anchor="middle">19</text>
<ellipse class="l" cx="540.0" cy="404.0" rx="3.0" ry="2.3"/>
<ellipse class="l" cx="543.0" cy="459.0" rx="3.0" ry="2.3"/>
<path class="ds" d="M533.3 323L515.8 342V445"/>
<path class="ds" d="M543.2 325.8L523.4 345.8V445"/>
<path class="ds" d="M536 308.6H501.8L481.8 328.7"/>
<rect class="l" x="146.6" y="315.2" width="7.0" height="27.3"/>
<circle cx="150.1" cy="322.5" r="0.3" fill="#333"/>
<circle class="l" cx="150.1" cy="329.0" r="0.8"/>
<circle class="k" cx="149.8" cy="351.5" r="8.2"/>
<path class="k" d="M141.6 351.5L158.0 351.5"/>
<text class="tn" x="149.8" y="350.3" font-size="6.2" text-anchor="middle" textLength="3.6" lengthAdjust="spacingAndGlyphs">14</text>
<text class="tn" x="149.8" y="358.3" font-size="6.2" text-anchor="middle" textLength="6.4" lengthAdjust="spacingAndGlyphs">SFD</text>
<path class="l" d="M135.1 358A25.8 25.8 0 0 1 161.8 333.3V364.9"/>
<path class="l" d="M135.1 358.0L135.1 364.9"/>
<path class="l" d="M127.2 356.4L127.2 368.0"/>
<circle cx="127.2" cy="357.4" r="0.5" fill="#333"/>
<path class="l" d="M130.6 356.4L130.6 368.0"/>
<circle cx="130.6" cy="357.4" r="0.5" fill="#333"/>
<path class="l" d="M134.9 356.4L134.9 368.0"/>
<circle cx="134.9" cy="357.4" r="0.5" fill="#333"/>
<path class="l" d="M120.0 357.4L135.4 357.4"/>
<text class="tx" x="123.0" y="356.4" font-size="2.6" text-anchor="middle">70</text>
<text class="tx" x="132.8" y="356.4" font-size="2.6" text-anchor="middle">200</text>
<rect x="127.2" y="365.2" width="3" height="3.4" fill="#666"/>
<rect class="l" x="130.7" y="365.2" width="3.4" height="3.4"/>
<circle cx="131.0" cy="374.8" r="0.8" fill="#333"/>
<path class="dd" d="M183.3 428.5V345Q183.3 341.5 186.9 341.5H197.4"/>
<rect class="l" x="109.4" y="384.6" width="8.4" height="3.0" rx="0.3"/>
<rect class="g" x="112.2" y="385.2" width="2.8" height="1.8"/>
<rect class="l" x="145.2" y="384.6" width="8.4" height="3.0" rx="0.3"/>
<rect class="g" x="148.0" y="385.2" width="2.8" height="1.8"/>
<rect class="l" x="179.8" y="384.6" width="8.4" height="3.0" rx="0.3"/>
<rect class="g" x="182.6" y="385.2" width="2.8" height="1.8"/>
<rect class="l" x="145.2" y="427.0" width="8.4" height="3.0" rx="0.3"/>
<rect class="g" x="148.0" y="427.6" width="2.8" height="1.8"/>
<rect class="l" x="179.8" y="427.0" width="8.4" height="3.0" rx="0.3"/>
<rect class="g" x="182.6" y="427.6" width="2.8" height="1.8"/>
<path class="dd" d="M117.8 386.1L179.8 386.1"/>
<path class="dd" d="M153.6 428.5L179.8 428.5"/>
<path class="ds" d="M127.4 373.8H117.4Q113.6 373.8 113.6 378V386"/>
<path class="ds" d="M133.4 366Q138.4 367 138.4 372V395Q137.4 402 129.4 406"/>
<path class="dd" d="M127.4 368.0L127.4 446.0"/>
<path class="ds" d="M142.4 440Q171.4 440 177.4 435L184.0 428.5"/>
<ellipse class="l" cx="155.2" cy="393.2" rx="3.5" ry="2.8"/>
<text class="tx" x="155.2" y="394.1" font-size="2.4" text-anchor="middle">11</text>
<path class="ds" d="M144.4 402.0L152.4 395.4"/>
<path class="g" d="M95.7 405.2L133.4 405.2"/>
<path class="g" d="M95.7 406.6L151.8 406.6"/>
<rect x="136.4" y="405.2" width="2.9" height="43.3" fill="#dedede" stroke="#777" stroke-width="0.4"/>
<rect x="133.3" y="405.2" width="3.1" height="18" fill="#ececec" stroke="#666" stroke-width="0.35"/>
<path class="l" d="M96.3 413.4h4.0q1.2 1.4 3.0 0.4q4.5 -2 8.6 0.8q2.2 2.6 0 5.2q-4.1 2.8 -8.6 0.8q-1.8 -1 -3.0 0.4h-4.0z"/>
<path class="g" d="M100.3 413.4L100.3 421.0"/>
<circle cx="114.7" cy="415.9" r="0.7" fill="#333"/>
<rect class="m" x="96.0" y="423.8" width="17.0" height="20.6" rx="0.8"/>
<rect class="g" x="96.7" y="424.5" width="15.6" height="19.2" rx="0.6"/>
<rect class="m" x="97.5" y="425.3" width="14.0" height="17.6" rx="0.5"/>
<path class="m" d="M136.2 424A13.0 10.3 0 0 0 136.2 444.5"/>
<path class="g" d="M136.2 425.2A11.6 9.2 0 0 0 136.2 443.4"/>
<ellipse class="m" cx="130.3" cy="434.5" rx="3.5" ry="7.0"/>
<ellipse class="g" cx="130.3" cy="434.5" rx="2.7" ry="6.1"/>
<circle class="l" cx="116.4" cy="428.4" r="1.4"/>
<path class="l" d="M117.0 429.6Q119.4 436 123.6 437"/>
<path class="l" d="M119.4 406.6A13.6 13.6 0 0 0 133.0 420.2"/>
<rect class="l" x="113.3" y="408.5" width="2.3" height="2.8"/>
<path class="l" d="M114.4 401.4L114.4 408.5"/>
<path class="l" d="M112.4 401.4L118.4 401.4"/>
<text class="tx" x="115.9" y="400.6" font-size="2.2" text-anchor="middle">200</text>
<path class="dd" d="M127.4 409.0L127.4 440.0"/>
<path class="l" d="M95.7 445.2L136.4 445.2"/>
<path class="g" d="M107.4 445.2L107.4 449.3"/>
<path class="g" d="M117.9 445.2L117.9 449.3"/>
<path class="g" d="M127.4 445.2L127.4 449.3"/>
<path class="l" d="M95.7 449.3L155.9 449.3"/>
<path class="l" d="M181.9 449.3L198.0 449.3"/>
<path class="l" d="M95.7 452.4L155.9 452.4"/>
<path class="l" d="M181.9 452.4L198.0 452.4"/>
<path class="g" d="M95.7 450.8L155.9 450.8"/>
<path class="g" d="M181.9 450.8L198.0 450.8"/>
<path class="l" d="M181.9 449.3L181.9 452.4"/>
<path class="l" d="M155.9 451.0L181.9 451.0"/>
<path class="l" d="M155.9 449.3L155.9 452.4"/>
<path class="l" d="M147.6 449.0L147.6 460.3"/>
<circle cx="147.6" cy="460.3" r="0.5" fill="#333"/>
<path class="l" d="M151.1 449.0L151.1 460.3"/>
<circle cx="151.1" cy="460.3" r="0.5" fill="#333"/>
<path class="l" d="M155.3 449.0L155.3 460.3"/>
<circle cx="155.3" cy="460.3" r="0.5" fill="#333"/>
<path class="l" d="M138.9 460.3L155.9 460.3"/>
<text class="tx" x="143.0" y="459.2" font-size="2.6" text-anchor="middle">70</text>
<text class="tx" x="152.8" y="459.2" font-size="2.6" text-anchor="middle">200</text>
<rect x="147.0" y="448.4" width="2.5" height="2.4" fill="#555"/>
<rect x="150.5" y="448.4" width="2.5" height="2.4" fill="#555"/>
<circle cx="150.8" cy="441.9" r="0.8" fill="#333"/>
<ellipse class="l" cx="150.8" cy="435.4" rx="2.2" ry="1.6"/>
<path class="l" d="M181.9 445.4L181.9 453.0"/>
<circle cx="181.9" cy="445.4" r="0.5" fill="#333"/>
<path class="l" d="M186.6 445.4L186.6 453.0"/>
<circle cx="186.6" cy="445.4" r="0.5" fill="#333"/>
<path class="l" d="M189.7 445.4L189.7 453.0"/>
<circle cx="189.7" cy="445.4" r="0.5" fill="#333"/>
<path class="l" d="M181.9 445.4L196.4 445.4"/>
<text class="tx" x="184.4" y="444.3" font-size="2.6" text-anchor="middle">200</text>
<text class="tx" x="193.0" y="444.3" font-size="2.6" text-anchor="middle">70</text>
<rect x="185.1" y="452.5" width="5.9" height="1.5" fill="#444"/>
<circle cx="186.6" cy="460.0" r="0.8" fill="#333"/>
<rect class="l" x="142.6" y="487.6" width="14.4" height="14.4"/>
<circle cx="144.8" cy="489.8" r="0.3" fill="#333"/>
<circle cx="154.8" cy="489.8" r="0.3" fill="#333"/>
<circle cx="144.8" cy="499.8" r="0.3" fill="#333"/>
<circle cx="154.8" cy="499.8" r="0.3" fill="#333"/>
<circle class="l" cx="149.6" cy="491.8" r="0.9"/>
<path class="dd" d="M126.8 458V480Q126.8 484.5 130.9 484.5H159.4Q163.9 484.5 163.9 488V535"/>
<path class="ds" d="M161.6 480.0L161.6 536.0"/>
<path class="ds" d="M185.4 457L161.8 478V486"/>
<path class="dd" d="M140.2 460V464.5Q140.2 466.5 142.4 466.5H179.4"/>
<path class="dd" d="M185.8 458.0L185.8 489.0"/>
<path class="dd" d="M151.1 491.8H183.4Q185.8 491.8 185.8 489"/>
<ellipse class="l" cx="147.6" cy="470.8" rx="3.6" ry="2.9"/>
<text class="tx" x="147.6" y="471.7" font-size="2.4" text-anchor="middle">31</text>
<path class="l" d="M148.9 473.5L149.8 476V490.6"/>
<path class="ds" d="M150.4 475.0L155.4 471.5"/>
<path class="ds" d="M165.4 536.0L180.4 510.0"/>
<path class="ds" d="M168.0 536.6L183.0 511.0"/>
<circle class="l" cx="163.0" cy="537.0" r="1.1"/>
<rect x="164.4" y="535.4" width="3" height="3" fill="#777"/>
<path class="m" d="M160.0 539.0L160.0 550.0"/>
<path class="m" d="M163.4 539.0L163.4 550.0"/>
<path class="m" d="M167.0 539.0L167.0 550.0"/>
<text class="tx" x="156.4" y="547.6" font-size="2.2" text-anchor="middle">250</text>
<text class="tx" x="171.0" y="547.6" font-size="2.2" text-anchor="middle">70</text>
<text class="tx" x="168.4" y="465.6" font-size="2.2" text-anchor="middle">CD0</text>
<path d="M178.0 525.0V552" stroke="#222" stroke-width="0.8"/>
<circle cx="178.0" cy="525.0" r="0.6" fill="#333"/>
<rect class="l" x="257.5" y="315.2" width="7.0" height="27.3"/>
<circle cx="261.0" cy="322.5" r="0.3" fill="#333"/>
<circle class="l" cx="261.0" cy="329.0" r="0.8"/>
<circle class="k" cx="260.7" cy="351.5" r="8.2"/>
<path class="k" d="M252.5 351.5L268.9 351.5"/>
<text class="tn" x="260.7" y="350.3" font-size="6.2" text-anchor="middle" textLength="3.6" lengthAdjust="spacingAndGlyphs">14</text>
<text class="tn" x="260.7" y="358.3" font-size="6.2" text-anchor="middle" textLength="6.4" lengthAdjust="spacingAndGlyphs">SFD</text>
<path class="l" d="M246.0 358A25.8 25.8 0 0 1 272.7 333.3V364.9"/>
<path class="l" d="M246.0 358.0L246.0 364.9"/>
<path class="l" d="M238.1 356.4L238.1 368.0"/>
<circle cx="238.1" cy="357.4" r="0.5" fill="#333"/>
<path class="l" d="M241.5 356.4L241.5 368.0"/>
<circle cx="241.5" cy="357.4" r="0.5" fill="#333"/>
<path class="l" d="M245.8 356.4L245.8 368.0"/>
<circle cx="245.8" cy="357.4" r="0.5" fill="#333"/>
<path class="l" d="M230.9 357.4L246.3 357.4"/>
<text class="tx" x="233.9" y="356.4" font-size="2.6" text-anchor="middle">70</text>
<text class="tx" x="243.7" y="356.4" font-size="2.6" text-anchor="middle">200</text>
<rect x="238.1" y="365.2" width="3" height="3.4" fill="#666"/>
<rect class="l" x="241.6" y="365.2" width="3.4" height="3.4"/>
<circle cx="241.9" cy="374.8" r="0.8" fill="#333"/>
<ellipse class="l" cx="207.4" cy="343.0" rx="3.8" ry="2.8"/>
<text class="tx" x="207.4" y="343.9" font-size="2.4" text-anchor="middle">21</text>
<path class="dd" d="M195.3 343.0L201.8 343.0"/>
<path class="dd" d="M294.2 428.5V345Q294.2 341.5 297.8 341.5H308.3"/>
<rect class="l" x="220.3" y="384.6" width="8.4" height="3.0" rx="0.3"/>
<rect class="g" x="223.1" y="385.2" width="2.8" height="1.8"/>
<rect class="l" x="256.1" y="384.6" width="8.4" height="3.0" rx="0.3"/>
<rect class="g" x="258.9" y="385.2" width="2.8" height="1.8"/>
<rect class="l" x="290.7" y="384.6" width="8.4" height="3.0" rx="0.3"/>
<rect class="g" x="293.5" y="385.2" width="2.8" height="1.8"/>
<rect class="l" x="219.7" y="427.0" width="8.4" height="3.0" rx="0.3"/>
<rect class="g" x="222.5" y="427.6" width="2.8" height="1.8"/>
<rect class="l" x="255.3" y="427.0" width="8.4" height="3.0" rx="0.3"/>
<rect class="g" x="258.1" y="427.6" width="2.8" height="1.8"/>
<path class="dd" d="M228.7 386.1L290.7 386.1"/>
<path class="dd" d="M228.1 428.5L255.3 428.5"/>
<path class="ds" d="M238.3 373.8H228.3Q223.6 373.8 223.6 378V428.5L236.3 440H264.3"/>
<path class="ds" d="M244.3 366Q249.3 367 249.3 372V432Q250.3 440 256.3 440"/>
<path class="dd" d="M238.3 368.0L238.3 446.0"/>
<path class="ds" d="M248.3 366L288.3 406"/>
<path class="ds" d="M278.3 397Q278.3 374 282.3 372.5"/>
<ellipse class="l" cx="284.3" cy="370.0" rx="3.6" ry="2.8"/>
<text class="tx" x="284.3" y="370.9" font-size="2.4" text-anchor="middle">12</text>
<path class="g" d="M312.9 405.2L275.2 405.2"/>
<path class="g" d="M312.9 406.6L256.8 406.6"/>
<rect x="269.3" y="405.2" width="2.9" height="43.3" fill="#dedede" stroke="#777" stroke-width="0.4"/>
<rect x="272.2" y="405.2" width="3.1" height="18" fill="#ececec" stroke="#666" stroke-width="0.35"/>
<path class="l" d="M312.3 413.4h-4.0q-1.2 1.4 -3.0 0.4q-4.5 -2 -8.6 0.8q-2.2 2.6 0 5.2q4.1 2.8 8.6 0.8q1.8 -1 3.0 0.4h4.0z"/>
<path class="g" d="M308.3 413.4L308.3 421.0"/>
<circle cx="293.9" cy="415.9" r="0.7" fill="#333"/>
<rect class="m" x="295.6" y="423.8" width="17.0" height="20.6" rx="0.8"/>
<rect class="g" x="296.3" y="424.5" width="15.6" height="19.2" rx="0.6"/>
<rect class="m" x="297.1" y="425.3" width="14.0" height="17.6" rx="0.5"/>
<path class="m" d="M272.4 424A13.0 10.3 0 0 1 272.4 444.5"/>
<path class="g" d="M272.4 425.2A11.6 9.2 0 0 1 272.4 443.4"/>
<ellipse class="m" cx="278.3" cy="434.5" rx="3.5" ry="7.0"/>
<ellipse class="g" cx="278.3" cy="434.5" rx="2.7" ry="6.1"/>
<circle class="l" cx="292.2" cy="428.4" r="1.4"/>
<path class="l" d="M291.6 429.6Q289.2 436 285.0 437"/>
<path class="l" d="M289.2 406.6A13.6 13.6 0 0 1 275.6 420.2"/>
<rect class="l" x="293.0" y="408.5" width="2.3" height="2.8"/>
<path class="l" d="M294.2 401.4L294.2 408.5"/>
<path class="l" d="M296.2 401.4L290.2 401.4"/>
<text class="tx" x="292.7" y="400.6" font-size="2.2" text-anchor="middle">200</text>
<path class="dd" d="M281.2 409.0L281.2 440.0"/>
<path class="l" d="M308.9 445.2L272.2 445.2"/>
<path class="g" d="M301.2 445.2L301.2 449.3"/>
<path class="g" d="M290.7 445.2L290.7 449.3"/>
<path class="g" d="M281.2 445.2L281.2 449.3"/>
<path class="l" d="M308.9 449.3L252.7 449.3"/>
<path class="l" d="M226.7 449.3L210.6 449.3"/>
<path class="l" d="M308.9 452.4L252.7 452.4"/>
<path class="l" d="M226.7 452.4L210.6 452.4"/>
<path class="g" d="M308.9 450.8L252.7 450.8"/>
<path class="g" d="M226.7 450.8L210.6 450.8"/>
<path class="l" d="M226.7 449.3L226.7 452.4"/>
<path class="l" d="M252.7 451.0L226.7 451.0"/>
<path class="l" d="M252.7 449.3L252.7 452.4"/>
<path class="l" d="M261.0 449.0L261.0 460.3"/>
<circle cx="261.0" cy="460.3" r="0.5" fill="#333"/>
<path class="l" d="M257.5 449.0L257.5 460.3"/>
<circle cx="257.5" cy="460.3" r="0.5" fill="#333"/>
<path class="l" d="M253.3 449.0L253.3 460.3"/>
<circle cx="253.3" cy="460.3" r="0.5" fill="#333"/>
<path class="l" d="M269.7 460.3L252.7 460.3"/>
<text class="tx" x="265.6" y="459.2" font-size="2.6" text-anchor="middle">70</text>
<text class="tx" x="255.8" y="459.2" font-size="2.6" text-anchor="middle">200</text>
<rect x="259.1" y="448.4" width="2.5" height="2.4" fill="#555"/>
<rect x="255.6" y="448.4" width="2.5" height="2.4" fill="#555"/>
<circle cx="257.8" cy="441.9" r="0.8" fill="#333"/>
<ellipse class="l" cx="257.8" cy="435.4" rx="2.2" ry="1.6"/>
<path class="l" d="M226.7 445.4L226.7 453.0"/>
<circle cx="226.7" cy="445.4" r="0.5" fill="#333"/>
<path class="l" d="M222.0 445.4L222.0 453.0"/>
<circle cx="222.0" cy="445.4" r="0.5" fill="#333"/>
<path class="l" d="M218.9 445.4L218.9 453.0"/>
<circle cx="218.9" cy="445.4" r="0.5" fill="#333"/>
<path class="l" d="M226.7 445.4L212.2 445.4"/>
<text class="tx" x="224.2" y="444.3" font-size="2.6" text-anchor="middle">200</text>
<text class="tx" x="215.6" y="444.3" font-size="2.6" text-anchor="middle">70</text>
<rect x="217.6" y="452.5" width="5.9" height="1.5" fill="#444"/>
<circle cx="222.0" cy="460.0" r="0.8" fill="#333"/>
<rect class="l" x="251.7" y="487.6" width="14.4" height="14.4"/>
<circle cx="253.9" cy="489.8" r="0.3" fill="#333"/>
<circle cx="263.9" cy="489.8" r="0.3" fill="#333"/>
<circle cx="253.9" cy="499.8" r="0.3" fill="#333"/>
<circle cx="263.9" cy="499.8" r="0.3" fill="#333"/>
<circle class="l" cx="259.1" cy="491.8" r="0.9"/>
<path class="dd" d="M222.3 458V462Q222.3 464.4 224.7 464.4H266.3"/>
<path class="dd" d="M219.3 456L246.3 478Q248.9 481 248.9 486V531Q248.9 535 252.9 535H272.3"/>
<path class="dd" d="M242.3 458V506Q242.3 508.6 245.3 508.6H270.3Q274.7 508.6 274.7 512V535"/>
<path class="dd" d="M225.3 467V489Q225.3 491.8 228.3 491.8H257.7"/>
<circle cx="225.5" cy="459.6" r="0.8" fill="#333"/>
<path class="ds" d="M259.7 490.0L275.9 468.0"/>
<path class="ds" d="M274.3 534.0L289.3 510.0"/>
<path class="ds" d="M276.7 534.6L291.7 511.0"/>
<circle class="l" cx="271.9" cy="535.4" r="1.1"/>
<rect x="273.9" y="533.8" width="3" height="3" fill="#777"/>
<path class="m" d="M273.7 539.0L273.7 550.0"/>
<path class="m" d="M277.5 539.0L277.5 550.0"/>
<text class="tx" x="267.9" y="547.6" font-size="2.2" text-anchor="middle">250</text>
<text class="tx" x="280.9" y="547.6" font-size="2.2" text-anchor="middle">70</text>
<path d="M254.2 524.0V552" stroke="#222" stroke-width="0.8"/>
<circle cx="254.2" cy="524.0" r="0.6" fill="#333"/>
<rect class="l" x="368.4" y="315.2" width="7.0" height="27.3"/>
<circle cx="371.9" cy="322.5" r="0.3" fill="#333"/>
<circle class="l" cx="371.9" cy="329.0" r="0.8"/>
<circle class="k" cx="371.6" cy="351.5" r="8.2"/>
<path class="k" d="M363.4 351.5L379.8 351.5"/>
<text class="tn" x="371.6" y="350.3" font-size="6.2" text-anchor="middle" textLength="3.6" lengthAdjust="spacingAndGlyphs">14</text>
<text class="tn" x="371.6" y="358.3" font-size="6.2" text-anchor="middle" textLength="6.4" lengthAdjust="spacingAndGlyphs">SFD</text>
<path class="l" d="M356.9 358A25.8 25.8 0 0 1 383.6 333.3V364.9"/>
<path class="l" d="M356.9 358.0L356.9 364.9"/>
<path class="l" d="M349.0 356.4L349.0 368.0"/>
<circle cx="349.0" cy="357.4" r="0.5" fill="#333"/>
<path class="l" d="M352.4 356.4L352.4 368.0"/>
<circle cx="352.4" cy="357.4" r="0.5" fill="#333"/>
<path class="l" d="M356.7 356.4L356.7 368.0"/>
<circle cx="356.7" cy="357.4" r="0.5" fill="#333"/>
<path class="l" d="M341.8 357.4L357.2 357.4"/>
<text class="tx" x="344.8" y="356.4" font-size="2.6" text-anchor="middle">70</text>
<text class="tx" x="354.6" y="356.4" font-size="2.6" text-anchor="middle">200</text>
<rect x="349.0" y="365.2" width="3" height="3.4" fill="#666"/>
<rect class="l" x="352.5" y="365.2" width="3.4" height="3.4"/>
<circle cx="352.8" cy="374.8" r="0.8" fill="#333"/>
<ellipse class="l" cx="318.3" cy="343.0" rx="3.8" ry="2.8"/>
<text class="tx" x="318.3" y="343.9" font-size="2.4" text-anchor="middle">22</text>
<path class="dd" d="M306.2 343.0L312.7 343.0"/>
<path class="dd" d="M405.1 428.5V345Q405.1 341.5 408.7 341.5H419.2"/>
<rect class="l" x="331.2" y="384.6" width="8.4" height="3.0" rx="0.3"/>
<rect class="g" x="334.0" y="385.2" width="2.8" height="1.8"/>
<rect class="l" x="367.0" y="384.6" width="8.4" height="3.0" rx="0.3"/>
<rect class="g" x="369.8" y="385.2" width="2.8" height="1.8"/>
<rect class="l" x="401.6" y="384.6" width="8.4" height="3.0" rx="0.3"/>
<rect class="g" x="404.4" y="385.2" width="2.8" height="1.8"/>
<rect class="l" x="367.0" y="427.0" width="8.4" height="3.0" rx="0.3"/>
<rect class="g" x="369.8" y="427.6" width="2.8" height="1.8"/>
<rect class="l" x="401.6" y="427.0" width="8.4" height="3.0" rx="0.3"/>
<rect class="g" x="404.4" y="427.6" width="2.8" height="1.8"/>
<path class="dd" d="M339.6 386.1L401.6 386.1"/>
<path class="dd" d="M375.4 428.5L401.6 428.5"/>
<path class="ds" d="M349.2 373.8H339.2Q335.4 373.8 335.4 378V386"/>
<path class="ds" d="M355.2 366Q360.2 367 360.2 372V395Q359.2 402 351.2 406"/>
<path class="dd" d="M349.2 368.0L349.2 446.0"/>
<path class="ds" d="M364.2 440Q393.2 440 399.2 435L405.8 428.5"/>
<ellipse class="l" cx="377.0" cy="393.2" rx="3.5" ry="2.8"/>
<text class="tx" x="377.0" y="394.1" font-size="2.4" text-anchor="middle">13</text>
<path class="ds" d="M366.2 402.0L374.2 395.4"/>
<path class="g" d="M317.5 405.2L355.2 405.2"/>
<path class="g" d="M317.5 406.6L373.6 406.6"/>
<rect x="358.2" y="405.2" width="2.9" height="43.3" fill="#dedede" stroke="#777" stroke-width="0.4"/>
<rect x="355.1" y="405.2" width="3.1" height="18" fill="#ececec" stroke="#666" stroke-width="0.35"/>
<path class="l" d="M318.1 413.4h4.0q1.2 1.4 3.0 0.4q4.5 -2 8.6 0.8q2.2 2.6 0 5.2q-4.1 2.8 -8.6 0.8q-1.8 -1 -3.0 0.4h-4.0z"/>
<path class="g" d="M322.1 413.4L322.1 421.0"/>
<circle cx="336.5" cy="415.9" r="0.7" fill="#333"/>
<rect class="m" x="317.8" y="423.8" width="17.0" height="20.6" rx="0.8"/>
<rect class="g" x="318.5" y="424.5" width="15.6" height="19.2" rx="0.6"/>
<rect class="m" x="319.3" y="425.3" width="14.0" height="17.6" rx="0.5"/>
<path class="m" d="M358.0 424A13.0 10.3 0 0 0 358.0 444.5"/>
<path class="g" d="M358.0 425.2A11.6 9.2 0 0 0 358.0 443.4"/>
<ellipse class="m" cx="352.1" cy="434.5" rx="3.5" ry="7.0"/>
<ellipse class="g" cx="352.1" cy="434.5" rx="2.7" ry="6.1"/>
<circle class="l" cx="338.2" cy="428.4" r="1.4"/>
<path class="l" d="M338.8 429.6Q341.2 436 345.4 437"/>
<path class="l" d="M341.2 406.6A13.6 13.6 0 0 0 354.8 420.2"/>
<rect class="l" x="335.1" y="408.5" width="2.3" height="2.8"/>
<path class="l" d="M336.2 401.4L336.2 408.5"/>
<path class="l" d="M334.2 401.4L340.2 401.4"/>
<text class="tx" x="337.7" y="400.6" font-size="2.2" text-anchor="middle">200</text>
<path class="dd" d="M349.2 409.0L349.2 440.0"/>
<path class="l" d="M321.5 445.2L358.2 445.2"/>
<path class="g" d="M329.2 445.2L329.2 449.3"/>
<path class="g" d="M339.7 445.2L339.7 449.3"/>
<path class="g" d="M349.2 445.2L349.2 449.3"/>
<path class="l" d="M321.5 449.3L377.7 449.3"/>
<path class="l" d="M403.7 449.3L419.8 449.3"/>
<path class="l" d="M321.5 452.4L377.7 452.4"/>
<path class="l" d="M403.7 452.4L419.8 452.4"/>
<path class="g" d="M321.5 450.8L377.7 450.8"/>
<path class="g" d="M403.7 450.8L419.8 450.8"/>
<path class="l" d="M403.7 449.3L403.7 452.4"/>
<path class="l" d="M377.7 451.0L403.7 451.0"/>
<path class="l" d="M377.7 449.3L377.7 452.4"/>
<path class="l" d="M369.4 449.0L369.4 460.3"/>
<circle cx="369.4" cy="460.3" r="0.5" fill="#333"/>
<path class="l" d="M372.9 449.0L372.9 460.3"/>
<circle cx="372.9" cy="460.3" r="0.5" fill="#333"/>
<path class="l" d="M377.1 449.0L377.1 460.3"/>
<circle cx="377.1" cy="460.3" r="0.5" fill="#333"/>
<path class="l" d="M360.7 460.3L377.7 460.3"/>
<text class="tx" x="364.8" y="459.2" font-size="2.6" text-anchor="middle">70</text>
<text class="tx" x="374.6" y="459.2" font-size="2.6" text-anchor="middle">200</text>
<rect x="368.8" y="448.4" width="2.5" height="2.4" fill="#555"/>
<rect x="372.3" y="448.4" width="2.5" height="2.4" fill="#555"/>
<circle cx="372.6" cy="441.9" r="0.8" fill="#333"/>
<ellipse class="l" cx="372.6" cy="435.4" rx="2.2" ry="1.6"/>
<path class="l" d="M403.7 445.4L403.7 453.0"/>
<circle cx="403.7" cy="445.4" r="0.5" fill="#333"/>
<path class="l" d="M408.4 445.4L408.4 453.0"/>
<circle cx="408.4" cy="445.4" r="0.5" fill="#333"/>
<path class="l" d="M411.5 445.4L411.5 453.0"/>
<circle cx="411.5" cy="445.4" r="0.5" fill="#333"/>
<path class="l" d="M403.7 445.4L418.2 445.4"/>
<text class="tx" x="406.2" y="444.3" font-size="2.6" text-anchor="middle">200</text>
<text class="tx" x="414.8" y="444.3" font-size="2.6" text-anchor="middle">70</text>
<rect x="406.9" y="452.5" width="5.9" height="1.5" fill="#444"/>
<circle cx="408.4" cy="460.0" r="0.8" fill="#333"/>
<rect class="l" x="364.2" y="487.6" width="14.4" height="14.4"/>
<circle cx="366.4" cy="489.8" r="0.3" fill="#333"/>
<circle cx="376.4" cy="489.8" r="0.3" fill="#333"/>
<circle cx="366.4" cy="499.8" r="0.3" fill="#333"/>
<circle cx="376.4" cy="499.8" r="0.3" fill="#333"/>
<circle class="l" cx="371.2" cy="491.8" r="0.9"/>
<path class="dd" d="M348.6 458V480Q348.6 484.5 352.7 484.5H381.2Q385.7 484.5 385.7 488V535"/>
<path class="ds" d="M383.4 480.0L383.4 536.0"/>
<path class="ds" d="M407.2 457L383.6 478V486"/>
<path class="dd" d="M362.0 460V464.5Q362.0 466.5 364.2 466.5H401.2"/>
<path class="dd" d="M407.6 458.0L407.6 489.0"/>
<path class="dd" d="M372.7 491.8H405.2Q407.6 491.8 407.6 489"/>
<ellipse class="l" cx="369.4" cy="470.8" rx="3.6" ry="2.9"/>
<text class="tx" x="369.4" y="471.7" font-size="2.4" text-anchor="middle">33</text>
<path class="l" d="M370.7 473.5L371.6 476V490.6"/>
<path class="ds" d="M372.2 475.0L377.2 471.5"/>
<path class="ds" d="M387.2 536.0L402.2 510.0"/>
<path class="ds" d="M389.8 536.6L404.8 511.0"/>
<circle class="l" cx="384.8" cy="537.0" r="1.1"/>
<rect x="386.2" y="535.4" width="3" height="3" fill="#777"/>
<path class="m" d="M381.8 539.0L381.8 550.0"/>
<path class="m" d="M385.2 539.0L385.2 550.0"/>
<path class="m" d="M388.8 539.0L388.8 550.0"/>
<text class="tx" x="378.2" y="547.6" font-size="2.2" text-anchor="middle">250</text>
<text class="tx" x="392.8" y="547.6" font-size="2.2" text-anchor="middle">70</text>
<text class="tx" x="390.2" y="465.6" font-size="2.2" text-anchor="middle">CD0</text>
<path d="M387.4 526.0V552" stroke="#222" stroke-width="0.8"/>
<circle cx="387.4" cy="526.0" r="0.6" fill="#333"/>
<rect class="l" x="479.3" y="315.2" width="7.0" height="27.3"/>
<circle cx="482.8" cy="322.5" r="0.3" fill="#333"/>
<circle class="l" cx="482.8" cy="329.0" r="0.8"/>
<circle class="k" cx="482.5" cy="351.5" r="8.2"/>
<path class="k" d="M474.3 351.5L490.7 351.5"/>
<text class="tn" x="482.5" y="350.3" font-size="6.2" text-anchor="middle" textLength="3.6" lengthAdjust="spacingAndGlyphs">14</text>
<text class="tn" x="482.5" y="358.3" font-size="6.2" text-anchor="middle" textLength="6.4" lengthAdjust="spacingAndGlyphs">SFD</text>
<path class="l" d="M467.8 358A25.8 25.8 0 0 1 494.5 333.3V364.9"/>
<path class="l" d="M467.8 358.0L467.8 364.9"/>
<path class="l" d="M459.9 356.4L459.9 368.0"/>
<circle cx="459.9" cy="357.4" r="0.5" fill="#333"/>
<path class="l" d="M463.3 356.4L463.3 368.0"/>
<circle cx="463.3" cy="357.4" r="0.5" fill="#333"/>
<path class="l" d="M467.6 356.4L467.6 368.0"/>
<circle cx="467.6" cy="357.4" r="0.5" fill="#333"/>
<path class="l" d="M452.7 357.4L468.1 357.4"/>
<text class="tx" x="455.7" y="356.4" font-size="2.6" text-anchor="middle">70</text>
<text class="tx" x="465.5" y="356.4" font-size="2.6" text-anchor="middle">200</text>
<rect x="459.9" y="365.2" width="3" height="3.4" fill="#666"/>
<rect class="l" x="463.4" y="365.2" width="3.4" height="3.4"/>
<circle cx="463.7" cy="374.8" r="0.8" fill="#333"/>
<ellipse class="l" cx="429.2" cy="343.0" rx="3.8" ry="2.8"/>
<text class="tx" x="429.2" y="343.9" font-size="2.4" text-anchor="middle">23</text>
<path class="dd" d="M417.1 343.0L423.6 343.0"/>
<path class="dd" d="M516.0 428.5V345Q516.0 341.5 519.6 341.5H530.1"/>
<rect class="l" x="442.1" y="384.6" width="8.4" height="3.0" rx="0.3"/>
<rect class="g" x="444.9" y="385.2" width="2.8" height="1.8"/>
<rect class="l" x="477.9" y="384.6" width="8.4" height="3.0" rx="0.3"/>
<rect class="g" x="480.7" y="385.2" width="2.8" height="1.8"/>
<rect class="l" x="512.5" y="384.6" width="8.4" height="3.0" rx="0.3"/>
<rect class="g" x="515.3" y="385.2" width="2.8" height="1.8"/>
<rect class="l" x="441.5" y="427.0" width="8.4" height="3.0" rx="0.3"/>
<rect class="g" x="444.3" y="427.6" width="2.8" height="1.8"/>
<rect class="l" x="477.1" y="427.0" width="8.4" height="3.0" rx="0.3"/>
<rect class="g" x="479.9" y="427.6" width="2.8" height="1.8"/>
<path class="dd" d="M450.5 386.1L512.5 386.1"/>
<path class="dd" d="M449.9 428.5L477.1 428.5"/>
<path class="ds" d="M460.1 373.8H450.1Q445.4 373.8 445.4 378V428.5L458.1 440H486.1"/>
<path class="ds" d="M466.1 366Q471.1 367 471.1 372V432Q472.1 440 478.1 440"/>
<path class="dd" d="M460.1 368.0L460.1 446.0"/>
<path class="ds" d="M470.1 366L510.1 406"/>
<path class="ds" d="M500.1 397Q500.1 374 504.1 372.5"/>
<ellipse class="l" cx="506.1" cy="370.0" rx="3.6" ry="2.8"/>
<text class="tx" x="506.1" y="370.9" font-size="2.4" text-anchor="middle">14</text>
<path class="g" d="M534.7 405.2L497.0 405.2"/>
<path class="g" d="M534.7 406.6L478.6 406.6"/>
<rect x="491.1" y="405.2" width="2.9" height="43.3" fill="#dedede" stroke="#777" stroke-width="0.4"/>
<rect x="494.0" y="405.2" width="3.1" height="18" fill="#ececec" stroke="#666" stroke-width="0.35"/>
<path class="l" d="M534.1 413.4h-4.0q-1.2 1.4 -3.0 0.4q-4.5 -2 -8.6 0.8q-2.2 2.6 0 5.2q4.1 2.8 8.6 0.8q1.8 -1 3.0 0.4h4.0z"/>
<path class="g" d="M530.1 413.4L530.1 421.0"/>
<circle cx="515.7" cy="415.9" r="0.7" fill="#333"/>
<rect class="m" x="517.4" y="423.8" width="17.0" height="20.6" rx="0.8"/>
<rect class="g" x="518.1" y="424.5" width="15.6" height="19.2" rx="0.6"/>
<rect class="m" x="518.9" y="425.3" width="14.0" height="17.6" rx="0.5"/>
<path class="m" d="M494.2 424A13.0 10.3 0 0 1 494.2 444.5"/>
<path class="g" d="M494.2 425.2A11.6 9.2 0 0 1 494.2 443.4"/>
<ellipse class="m" cx="500.1" cy="434.5" rx="3.5" ry="7.0"/>
<ellipse class="g" cx="500.1" cy="434.5" rx="2.7" ry="6.1"/>
<circle class="l" cx="514.0" cy="428.4" r="1.4"/>
<path class="l" d="M513.4 429.6Q511.0 436 506.8 437"/>
<path class="l" d="M511.0 406.6A13.6 13.6 0 0 1 497.4 420.2"/>
<rect class="l" x="514.8" y="408.5" width="2.3" height="2.8"/>
<path class="l" d="M516.0 401.4L516.0 408.5"/>
<path class="l" d="M518.0 401.4L512.0 401.4"/>
<text class="tx" x="514.5" y="400.6" font-size="2.2" text-anchor="middle">200</text>
<path class="dd" d="M503.0 409.0L503.0 440.0"/>
<path class="l" d="M530.7 445.2L494.0 445.2"/>
<path class="g" d="M523.0 445.2L523.0 449.3"/>
<path class="g" d="M512.5 445.2L512.5 449.3"/>
<path class="g" d="M503.0 445.2L503.0 449.3"/>
<path class="l" d="M530.7 449.3L470.0 449.3"/>
<path class="l" d="M530.7 452.4L470.0 452.4"/>
<path class="g" d="M530.7 450.8L470.0 450.8"/>
<path class="l" d="M470.0 451.0L432.4 451.0"/>
<path class="l" d="M470.0 449.3L470.0 452.4"/>
<path class="l" d="M482.8 449.0L482.8 460.3"/>
<circle cx="482.8" cy="460.3" r="0.5" fill="#333"/>
<path class="l" d="M479.3 449.0L479.3 460.3"/>
<circle cx="479.3" cy="460.3" r="0.5" fill="#333"/>
<path class="l" d="M475.1 449.0L475.1 460.3"/>
<circle cx="475.1" cy="460.3" r="0.5" fill="#333"/>
<path class="l" d="M491.5 460.3L474.5 460.3"/>
<text class="tx" x="487.4" y="459.2" font-size="2.6" text-anchor="middle">70</text>
<text class="tx" x="477.6" y="459.2" font-size="2.6" text-anchor="middle">200</text>
<rect x="480.9" y="448.4" width="2.5" height="2.4" fill="#555"/>
<rect x="477.4" y="448.4" width="2.5" height="2.4" fill="#555"/>
<circle cx="479.6" cy="441.9" r="0.8" fill="#333"/>
<ellipse class="l" cx="479.6" cy="435.4" rx="2.2" ry="1.6"/>
<rect class="l" x="473.2" y="487.6" width="14.4" height="14.4"/>
<circle cx="475.4" cy="489.8" r="0.3" fill="#333"/>
<circle cx="485.4" cy="489.8" r="0.3" fill="#333"/>
<circle cx="475.4" cy="499.8" r="0.3" fill="#333"/>
<circle cx="485.4" cy="499.8" r="0.3" fill="#333"/>
<circle class="l" cx="480.6" cy="491.8" r="0.9"/>
<path class="dd" d="M460 452V477Q460 481.5 464 481.5H473"/>
<path class="dd" d="M468.8 460V481"/>
<path class="ds" d="M470.6 466V481"/>
<circle cx="468.8" cy="459.6" r="0.9" fill="#333"/>
<path class="dd" d="M470 506.6H482Q486 506.6 486 510V535"/>
<path class="ds" d="M484.0 508.0L484.0 535.0"/>
<circle class="l" cx="485.6" cy="535.4" r="1.1"/>
<rect x="487" y="533.8" width="3" height="3" fill="#777"/>
<rect x="464" y="453" width="6" height="1.6" fill="#444"/>
<text class="tx" x="473.6" y="447.6" font-size="2.4" text-anchor="middle">470</text>
<path d="M458.5 528.0V552" stroke="#222" stroke-width="0.8"/>
<circle cx="458.5" cy="528.0" r="0.6" fill="#333"/>
<text class="tx" x="453.0" y="327.4" font-size="2.4" text-anchor="middle">HP1,A1C</text>
<text class="tx" x="232.0" y="327.4" font-size="2.4" text-anchor="middle">HP1,A1C</text>
<path class="ds" d="M206 329L222.7 312.8H411L426.5 329L443.6 312.8H462"/>
<path d="M464.6 312.8l-2.6-.8v1.6z" fill="#444"/>
<circle cx="206.0" cy="329.0" r="2.0" fill="#333"/>
<circle cx="426.5" cy="329.0" r="2.0" fill="#333"/>
<path class="dd" d="M151.2 329.0L545.0 329.0"/>
<rect class="b" x="103.1" y="503.8" width="55.9" height="30.9"/>
<rect class="b" x="108.9" y="509.5" width="43.8" height="21.8"/>
<path class="b" d="M103.1 505.6L159.0 505.6"/>
<path class="b" d="M103.1 507.4L159.0 507.4"/>
<path class="b" d="M103.1 511.9L108.9 511.9"/>
<path class="b" d="M152.7 511.9L159.0 511.9"/>
<path class="b" d="M103.1 514.4L108.9 514.4"/>
<path class="b" d="M152.7 514.4L159.0 514.4"/>
<path class="b" d="M103.1 516.9L108.9 516.9"/>
<path class="b" d="M152.7 516.9L159.0 516.9"/>
<path class="b" d="M103.1 519.4L108.9 519.4"/>
<path class="b" d="M152.7 519.4L159.0 519.4"/>
<path class="b" d="M103.1 521.9L108.9 521.9"/>
<path class="b" d="M152.7 521.9L159.0 521.9"/>
<path class="b" d="M103.1 524.4L108.9 524.4"/>
<path class="b" d="M152.7 524.4L159.0 524.4"/>
<path class="b" d="M103.1 526.9L108.9 526.9"/>
<path class="b" d="M152.7 526.9L159.0 526.9"/>
<path class="b" d="M103.1 529.4L108.9 529.4"/>
<path class="b" d="M152.7 529.4L159.0 529.4"/>
<path class="b" d="M103.1 531.3L159.0 531.3"/>
<path class="b" d="M103.1 533.0L159.0 533.0"/>
<rect class="l" x="178.5" y="475.5" width="18.1" height="26.8" rx="1.6"/>
<path class="g" d="M178.5 480.1L196.6 480.1"/>
<path class="g" d="M178.5 497.7L196.6 497.7"/>
<circle cx="196.0" cy="476.4" r="0.5" fill="#333"/>
<path class="ds" d="M196.0 476.4L200.5 470.5"/>
<ellipse class="l" cx="191.9" cy="510.8" rx="3.6" ry="2.9"/>
<text class="tx" x="191.9" y="511.7" font-size="2.4" text-anchor="middle">04</text>
<rect class="l" x="211.8" y="475.5" width="17.9" height="26.8" rx="1.6"/>
<path class="g" d="M211.8 480.1L229.7 480.1"/>
<path class="g" d="M211.8 497.7L229.7 497.7"/>
<rect class="b" x="275.5" y="476.5" width="33.0" height="60.5"/>
<rect class="b" x="280.0" y="482.8" width="23.8" height="48.5"/>
<path class="b" d="M277.6 476.5L277.6 537.0"/>
<path class="b" d="M279.7 476.5L279.7 537.0"/>
<path class="b" d="M306.4 476.5L306.4 537.0"/>
<path class="b" d="M304.3 476.5L304.3 537.0"/>
<path class="b" d="M282.2 476.5L282.2 482.8"/>
<path class="b" d="M282.2 531.3L282.2 537.0"/>
<path class="b" d="M284.4 476.5L284.4 482.8"/>
<path class="b" d="M284.4 531.3L284.4 537.0"/>
<path class="b" d="M286.7 476.5L286.7 482.8"/>
<path class="b" d="M286.7 531.3L286.7 537.0"/>
<path class="b" d="M288.9 476.5L288.9 482.8"/>
<path class="b" d="M288.9 531.3L288.9 537.0"/>
<path class="b" d="M291.2 476.5L291.2 482.8"/>
<path class="b" d="M291.2 531.3L291.2 537.0"/>
<path class="b" d="M293.4 476.5L293.4 482.8"/>
<path class="b" d="M293.4 531.3L293.4 537.0"/>
<path class="b" d="M295.7 476.5L295.7 482.8"/>
<path class="b" d="M295.7 531.3L295.7 537.0"/>
<path class="b" d="M297.9 476.5L297.9 482.8"/>
<path class="b" d="M297.9 531.3L297.9 537.0"/>
<path class="b" d="M300.2 476.5L300.2 482.8"/>
<path class="b" d="M300.2 531.3L300.2 537.0"/>
<path class="b" d="M302.4 476.5L302.4 482.8"/>
<path class="b" d="M302.4 531.3L302.4 537.0"/>
<ellipse class="l" cx="282.8" cy="465.0" rx="4.0" ry="2.8"/>
<text class="tx" x="282.8" y="465.9" font-size="2.2" text-anchor="middle">201</text>
<ellipse class="l" cx="296.5" cy="509.5" rx="3.6" ry="2.9"/>
<text class="tx" x="296.5" y="510.4" font-size="2.4" text-anchor="middle">06</text>
<rect class="b" x="320.3" y="503.8" width="57.2" height="33.6"/>
<rect class="b" x="327.0" y="509.5" width="44.4" height="22.3"/>
<path class="b" d="M320.3 505.6L377.5 505.6"/>
<path class="b" d="M320.3 507.4L377.5 507.4"/>
<path class="b" d="M320.3 511.9L327.0 511.9"/>
<path class="b" d="M371.4 511.9L377.5 511.9"/>
<path class="b" d="M320.3 514.4L327.0 514.4"/>
<path class="b" d="M371.4 514.4L377.5 514.4"/>
<path class="b" d="M320.3 516.9L327.0 516.9"/>
<path class="b" d="M371.4 516.9L377.5 516.9"/>
<path class="b" d="M320.3 519.4L327.0 519.4"/>
<path class="b" d="M371.4 519.4L377.5 519.4"/>
<path class="b" d="M320.3 521.9L327.0 521.9"/>
<path class="b" d="M371.4 521.9L377.5 521.9"/>
<path class="b" d="M320.3 524.4L327.0 524.4"/>
<path class="b" d="M371.4 524.4L377.5 524.4"/>
<path class="b" d="M320.3 526.9L327.0 526.9"/>
<path class="b" d="M371.4 526.9L377.5 526.9"/>
<path class="b" d="M320.3 529.4L327.0 529.4"/>
<path class="b" d="M371.4 529.4L377.5 529.4"/>
<path class="b" d="M320.3 531.8L377.5 531.8"/>
<path class="b" d="M320.3 533.5L377.5 533.5"/>
<path class="l" d="M391.8 469.8L395.3 464.1L402.5 464.1L406.0 469.8L402.5 475.6L395.3 475.6Z"/>
<path class="l" d="M385.2 493.1L391.7 480.9L404.6 480.9L411.0 493.1L404.6 505.3L391.7 505.3Z"/>
<path class="l" d="M391.8 519.4L395.1 513.7L401.9 513.7L405.2 519.4L401.9 525.1L395.1 525.1Z"/>
<path class="ds" d="M385.2 493.1H396Q398 498 404 498L411 497"/>
<circle class="l" cx="397.6" cy="497.6" r="1.3"/>
<circle class="l" cx="398.5" cy="519.4" r="1.6"/>
<ellipse class="l" cx="370.3" cy="470.8" rx="3.6" ry="2.9"/>
<ellipse class="l" cx="409.6" cy="510.8" rx="3.6" ry="2.9"/>
<text class="tx" x="409.6" y="511.7" font-size="2.4" text-anchor="middle">06</text>
<circle class="l" cx="462.7" cy="496.1" r="11.0"/>
<path class="m" d="M453.5 501.3L473.2 490.4"/>
<circle cx="453.5" cy="501.3" r="0.7" fill="#333"/>
<circle cx="473.2" cy="490.4" r="0.7" fill="#333"/>
<text class="tx" x="463.0" y="495.0" font-size="2.4" text-anchor="middle" transform="rotate(-29 463 495)">1,000</text>
<circle class="l" cx="481.8" cy="468.9" r="5.3"/>
<circle class="l" cx="444.2" cy="523.2" r="5.9"/>
<rect class="b" x="494.2" y="481.3" width="33.4" height="56.1"/>
<rect class="b" x="499.0" y="486.6" width="22.9" height="44.7"/>
<path class="b" d="M496.3 481.3L496.3 537.4"/>
<path class="b" d="M498.4 481.3L498.4 537.4"/>
<path class="b" d="M525.5 481.3L525.5 537.4"/>
<path class="b" d="M523.4 481.3L523.4 537.4"/>
<path class="b" d="M501.2 481.3L501.2 486.6"/>
<path class="b" d="M501.2 531.3L501.2 537.4"/>
<path class="b" d="M503.4 481.3L503.4 486.6"/>
<path class="b" d="M503.4 531.3L503.4 537.4"/>
<path class="b" d="M505.7 481.3L505.7 486.6"/>
<path class="b" d="M505.7 531.3L505.7 537.4"/>
<path class="b" d="M507.9 481.3L507.9 486.6"/>
<path class="b" d="M507.9 531.3L507.9 537.4"/>
<path class="b" d="M510.2 481.3L510.2 486.6"/>
<path class="b" d="M510.2 531.3L510.2 537.4"/>
<path class="b" d="M512.5 481.3L512.5 486.6"/>
<path class="b" d="M512.5 531.3L512.5 537.4"/>
<path class="b" d="M514.7 481.3L514.7 486.6"/>
<path class="b" d="M514.7 531.3L514.7 537.4"/>
<path class="b" d="M517.0 481.3L517.0 486.6"/>
<path class="b" d="M517.0 531.3L517.0 537.4"/>
<path class="b" d="M519.2 481.3L519.2 486.6"/>
<path class="b" d="M519.2 531.3L519.2 537.4"/>
<ellipse class="l" cx="501.8" cy="469.4" rx="3.8" ry="2.8"/>
<text class="tx" x="501.8" y="470.3" font-size="2.2" text-anchor="middle">208</text>
<path class="ds" d="M497.6 471.6L491.0 476.6"/>
<path class="ds" d="M515.8 478V508L489 535"/>
<circle cx="515.8" cy="478.4" r="0.6" fill="#333"/>
<path class="ds" d="M492 452L507 463.6H536"/>
<text class="tx" x="524.0" y="466.8" font-size="2.4" text-anchor="middle">CV</text>
</svg>
</div>
</div>
</body>
</html>
